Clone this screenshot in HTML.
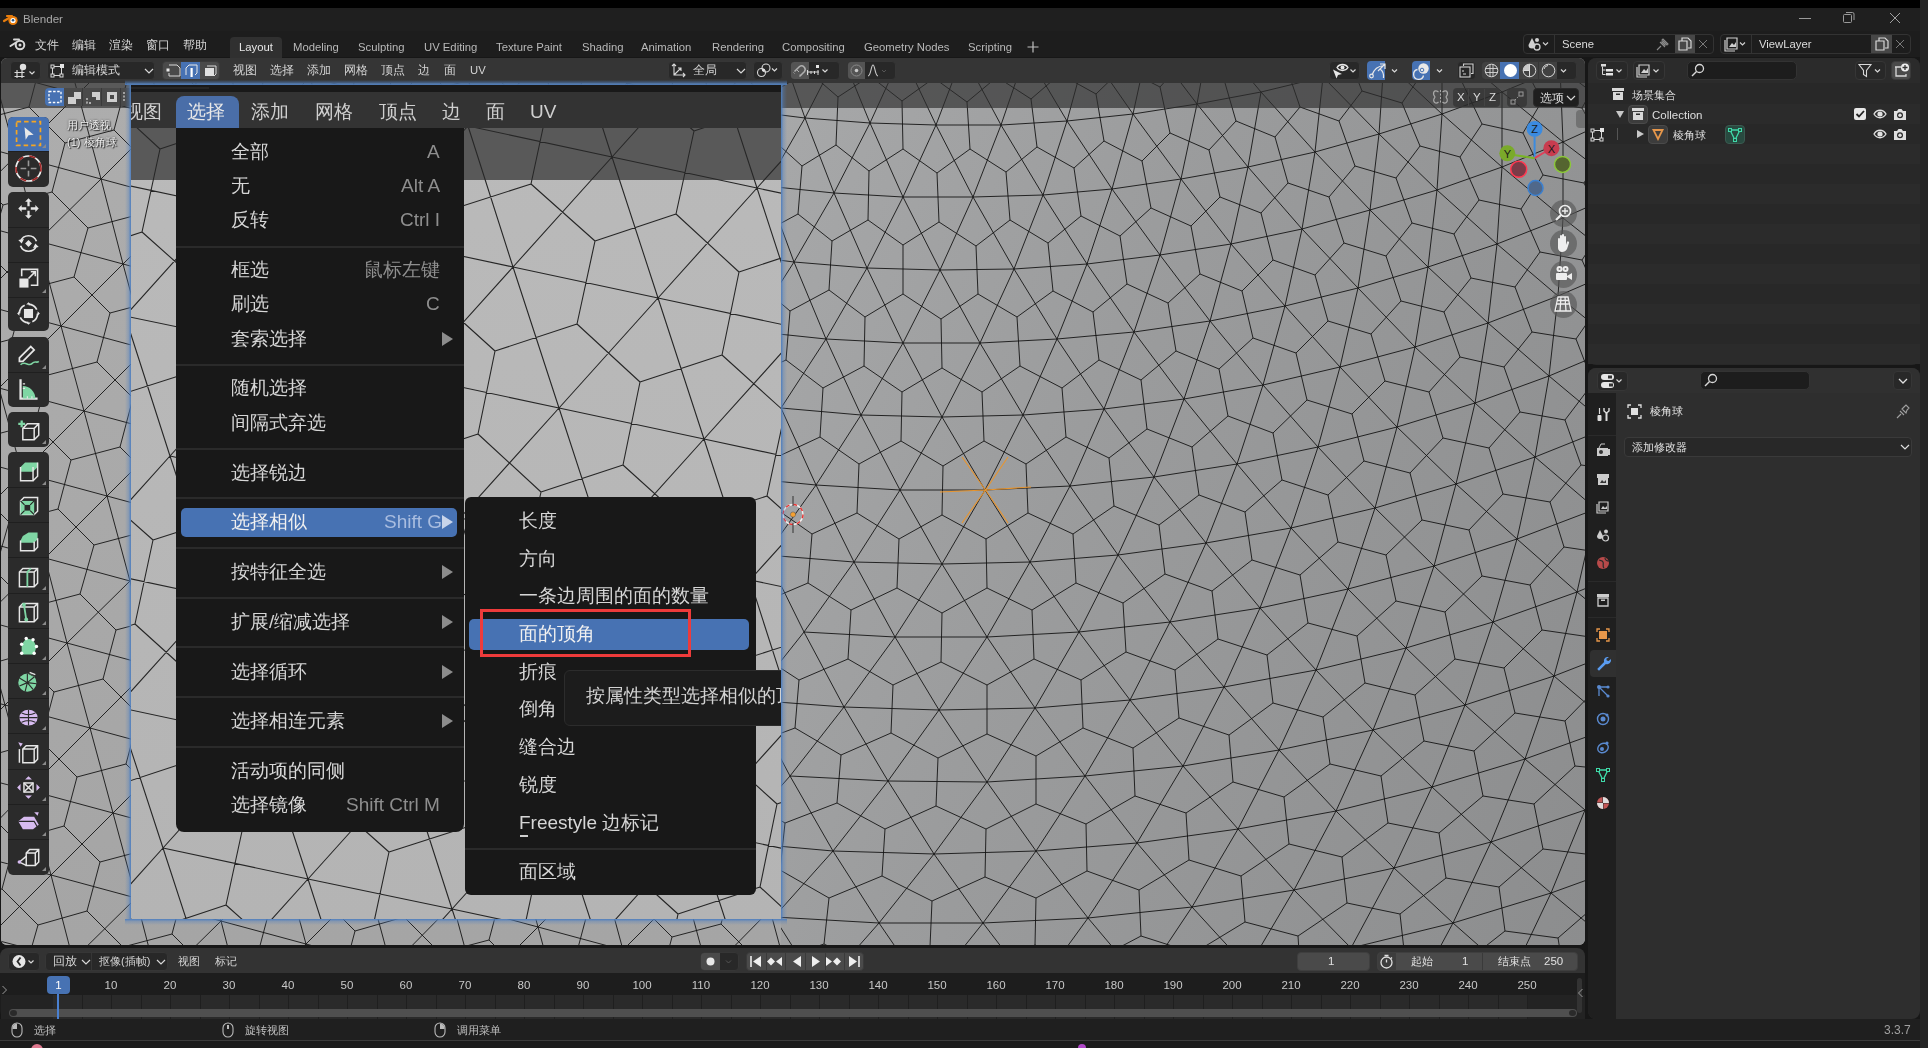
<!DOCTYPE html>
<html><head><meta charset="utf-8">
<style>
*{margin:0;padding:0;box-sizing:border-box}
html,body{width:1928px;height:1048px;overflow:hidden;background:#1d1d1d;font-family:"Liberation Sans",sans-serif;color:#d0d0d0}
.a{position:absolute}
.t{position:absolute;white-space:nowrap;font-size:12px;line-height:14px;color:#cccccc}
svg{position:absolute;left:0;top:0}
.c{position:absolute;white-space:nowrap;will-change:transform;font-size:11.5px;line-height:14px;color:#d4d4d4}
.bx{position:absolute;border-radius:4px;background:#282828;border:1px solid #3a3a3a}
.ic{position:absolute;overflow:visible}
.nb{left:1550px;width:27px;height:27px;border-radius:50%;background:rgba(85,85,85,0.62)}

.tbg{left:8px;width:41px;background:#2b2b2b;border-radius:5px}

.mi{position:absolute;will-change:transform;left:231px;white-space:nowrap;font-size:19px;line-height:22px;color:#d6d6d6}
.ms{position:absolute;will-change:transform;right:1488px;white-space:nowrap;font-size:19px;line-height:22px;color:#8e8e8e;text-align:right}
.si{position:absolute;will-change:transform;left:519px;white-space:nowrap;font-size:19px;line-height:22px;color:#d6d6d6}
.ma{position:absolute;left:442px;width:0;height:0;border-left:11px solid #8c8c8c;border-top:7px solid transparent;border-bottom:7px solid transparent}


</style></head><body>
<!-- top black strip -->
<div class="a" style="left:0;top:0;width:1920px;height:8px;background:#000"></div>
<div class="a" style="left:1920px;top:0;width:8px;height:1048px;background:#252525"></div>
<!-- title bar -->
<div class="a" style="left:0;top:8px;width:1920px;height:23px;background:#1f1f1f"></div>
<!-- top bar -->
<div class="a" style="left:0;top:31px;width:1920px;height:27px;background:#1d1d1d"></div>
<!-- gaps background -->
<div class="a" style="left:0;top:57px;width:1920px;height:984px;background:#171717"></div>

<!-- title contents -->
<svg class="ic" style="left:3px;top:12px" width="16" height="14" viewBox="0 0 16 14"><path d="M1 9 L6 6 M4 4 L9 4" stroke="#e87d0d" stroke-width="2.2" stroke-linecap="round"/><circle cx="10" cy="8.5" r="4.6" fill="#e87d0d"/><circle cx="10" cy="8.5" r="2.6" fill="#fff"/><circle cx="10" cy="8.3" r="1.3" fill="#265787"/></svg>
<div class="c" style="left:23px;top:12px;font-size:11.6px;color:#a8a8a8">Blender</div>
<svg class="ic" style="left:1799px;top:18px" width="12" height="2"><rect width="12" height="1" fill="#9a9a9a"/></svg>
<svg class="ic" style="left:1843px;top:12px" width="12" height="12" viewBox="0 0 12 12"><rect x="0.5" y="2.5" width="8" height="8" rx="1" fill="none" stroke="#9a9a9a"/><path d="M3 0.5h6.5a1.5 1.5 0 0 1 1.5 1.5V8" fill="none" stroke="#9a9a9a"/></svg>
<svg class="ic" style="left:1889px;top:12px" width="12" height="12" viewBox="0 0 12 12"><path d="M1 1L11 11M11 1L1 11" stroke="#a0a0a0" stroke-width="1"/></svg>
<!-- top bar contents -->
<svg class="ic" style="left:9px;top:36px" width="17" height="15" viewBox="0 0 17 15"><path d="M1.5 10 L7 6.5 M5 3.5 L10 3.5" stroke="#d8d8d8" stroke-width="2" stroke-linecap="round"/><circle cx="11" cy="9" r="4.3" fill="none" stroke="#d8d8d8" stroke-width="2"/><circle cx="11" cy="9" r="1.5" fill="#d8d8d8"/></svg>
<div class="c" style="left:35px;top:38px">文件</div>
<div class="c" style="left:72px;top:38px">编辑</div>
<div class="c" style="left:109px;top:38px">渲染</div>
<div class="c" style="left:146px;top:38px">窗口</div>
<div class="c" style="left:183px;top:38px">帮助</div>
<div class="a" style="left:230px;top:37px;width:52px;height:21px;background:#303030;border-radius:4px 4px 0 0"></div>
<div class="c" style="left:239px;top:40px;font-size:11.3px;color:#e6e6e6">Layout</div>
<div class="c" style="left:293px;top:40px;font-size:11.3px;color:#b8b8b8">Modeling</div>
<div class="c" style="left:358px;top:40px;font-size:11.3px;color:#b8b8b8">Sculpting</div>
<div class="c" style="left:424px;top:40px;font-size:11.3px;color:#b8b8b8">UV Editing</div>
<div class="c" style="left:496px;top:40px;font-size:11.3px;color:#b8b8b8">Texture Paint</div>
<div class="c" style="left:582px;top:40px;font-size:11.3px;color:#b8b8b8">Shading</div>
<div class="c" style="left:641px;top:40px;font-size:11.3px;color:#b8b8b8">Animation</div>
<div class="c" style="left:712px;top:40px;font-size:11.3px;color:#b8b8b8">Rendering</div>
<div class="c" style="left:782px;top:40px;font-size:11.3px;color:#b8b8b8">Compositing</div>
<div class="c" style="left:864px;top:40px;font-size:11.3px;color:#b8b8b8">Geometry Nodes</div>
<div class="c" style="left:968px;top:40px;font-size:11.3px;color:#b8b8b8">Scripting</div>
<svg class="ic" style="left:1027px;top:41px" width="12" height="12"><path d="M6 0.5V11.5M0.5 6H11.5" stroke="#c0c0c0" stroke-width="1.2"/></svg>
<!-- scene selector -->
<div class="bx" style="left:1523px;top:34px;width:191px;height:20px;background:#1d1d1d;border-color:#333"></div>
<div class="a" style="left:1554px;top:35px;width:1px;height:18px;background:#333"></div>
<div class="a" style="left:1675px;top:35px;width:20px;height:18px;background:#474747"></div>
<svg class="ic" style="left:1527px;top:36px" width="24" height="16" viewBox="0 0 24 16"><path d="M5 2 L1.5 9 a3.5 3.5 0 0 0 7 0Z" fill="#cfcfcf"/><circle cx="10" cy="4" r="2" fill="#cfcfcf"/><circle cx="10" cy="11" r="3" fill="none" stroke="#cfcfcf" stroke-width="1.3"/><path d="M16 6.5l2.5 2.5 2.5-2.5" fill="none" stroke="#cfcfcf" stroke-width="1.2"/></svg>
<div class="c" style="left:1562px;top:37px;font-size:11.3px;color:#dcdcdc">Scene</div>
<svg class="ic" style="left:1655px;top:36px" width="16" height="16" viewBox="0 0 16 16"><path d="M2 14 L6 10 M5 6 L10 11 M7 4 L12 9 L13 8 L8 3Z M6.5 5.5 L10.5 9.5" fill="none" stroke="#8a8a8a" stroke-width="1.1"/></svg>
<svg class="ic" style="left:1678px;top:37px" width="14" height="14" viewBox="0 0 14 14"><path d="M4 3.5V1h6l3 3v7H10 M1 4h8v9H1z" fill="none" stroke="#d8d8d8" stroke-width="1.2"/></svg>
<svg class="ic" style="left:1698px;top:39px" width="10" height="10"><path d="M1 1L9 9M9 1L1 9" stroke="#7a7a7a" stroke-width="1"/></svg>
<!-- view layer -->
<div class="bx" style="left:1720px;top:34px;width:191px;height:20px;background:#1d1d1d;border-color:#333"></div>
<div class="a" style="left:1751px;top:35px;width:1px;height:18px;background:#333"></div>
<div class="a" style="left:1871px;top:35px;width:21px;height:18px;background:#474747"></div>
<svg class="ic" style="left:1724px;top:36px" width="24" height="16" viewBox="0 0 24 16"><path d="M1 4v11h10 M3 2v11h10V2z" fill="none" stroke="#d0d0d0" stroke-width="1.2"/><path d="M5 11l3-4 2 2 2-3v5z" fill="#d0d0d0"/><path d="M16 6.5l2.5 2.5 2.5-2.5" fill="none" stroke="#cfcfcf" stroke-width="1.2"/></svg>
<div class="c" style="left:1759px;top:37px;font-size:11.3px;color:#dcdcdc">ViewLayer</div>
<svg class="ic" style="left:1875px;top:37px" width="14" height="14" viewBox="0 0 14 14"><path d="M4 3.5V1h6l3 3v7H10 M1 4h8v9H1z" fill="none" stroke="#d8d8d8" stroke-width="1.2"/></svg>
<svg class="ic" style="left:1895px;top:39px" width="10" height="10"><path d="M1 1L9 9M9 1L1 9" stroke="#7a7a7a" stroke-width="1"/></svg>

<!-- 3D viewport -->
<div class="a" id="vp" style="left:1px;top:58px;width:1584px;height:887px;border-radius:6px;overflow:hidden;background:#9a9a9a">
  <div class="a" style="left:0;top:0;width:1584px;height:25px;background:#353535"></div>
  <div class="a" style="left:780px;top:25px;width:804px;height:862px;background:linear-gradient(110deg,#a7a8a9 0%,#9b9c9d 38%,#8c8d8e 100%)"></div>
  <div class="a" style="left:0;top:25px;width:780px;height:862px;background:linear-gradient(180deg,#adadad 0%,#a5a5a5 100%)"></div>
</div>
<div class="a" style="left:781px;top:83px;width:804px;height:862px;overflow:hidden;border-radius:0 0 6px 0">
<svg width="804" height="862" viewBox="781 83 804 862"><path d="M732 842L833 851M824 944L769 963M774 917L879 923M774 917L820 990M795 728L744 747M750 700L844 707M750 700L790 776M837 803L785 823M785 823L738 795M790 776L888 781M790 776L833 851M790 776L732 842M882 876L829 898M829 898L780 870M780 870L785 823M833 851L934 854M833 851L879 923M833 851L774 917M875 969L824 944M824 944L829 898M879 923L983 923M879 923L927 993M879 923L820 990M733 477L816 485M808 583L761 603M766 555L854 562M766 555L804 632M848 659L799 680M799 680L756 652M804 632L895 637M804 632L844 707M804 632L750 700M891 733L841 755M841 755L795 728M795 728L799 680M844 707L939 710M844 707L888 781M844 707L790 776M936 806L885 829M885 829L837 803M837 803L841 755M888 781L987 782M888 781L934 854M888 781L833 851M985 877L932 901M932 901L882 876M882 876L885 829M934 854L1036 851M934 854L983 923M934 854L879 923M1035 945L982 970M930 947L932 901M983 923L1088 918M983 923L1035 991M983 923L927 993M723 253L794 262M786 360L745 379M750 331L826 339M750 331L781 408M820 437L777 457M781 408L861 415M781 408L816 485M781 408L733 477M857 513L812 534M812 534L772 506M816 485L900 490M816 485L854 562M816 485L766 555M897 588L851 610M851 610L808 583M808 583L812 534M854 562L942 564M854 562L895 637M854 562L804 632M941 662L893 685M893 685L848 659M848 659L851 610M895 637L987 637M895 637L939 710M895 637L844 707M987 734L938 758M938 758L891 733M891 733L893 685M939 710L1035 708M939 710L987 782M939 710L888 781M1036 804L986 829M986 829L936 806M936 806L938 758M987 782L1085 776M987 782L1036 851M987 782L934 854M1087 871L1036 898M1036 898L985 877M985 877L986 829M1036 851L1137 843M1036 851L1088 918M1036 851L983 923M1141 936L1088 964M1088 964L1035 945M1035 945L1036 898M1088 918L1192 907M1088 918L1142 982M1088 918L1035 991M741 110L805 118M798 214L761 234M766 186L834 193M766 186L794 262M829 290L790 311M790 311L756 282M794 262L867 268M794 262L826 339M794 262L750 331M864 366L823 388M823 388L786 360M786 360L790 311M826 339L903 343M826 339L861 415M826 339L781 408M901 441L859 464M859 464L820 437M820 437L823 388M861 415L942 417M861 415L900 490M861 415L816 485M942 515L899 539M899 539L857 513M857 513L859 464M900 490L985 490M900 490L942 564M900 490L854 562M987 588L942 613M942 613L897 588M897 588L899 539M942 564L1030 562M942 564L987 637M942 564L895 637M1034 659L987 685M987 685L941 662M941 662L942 613M987 637L1079 632M987 637L1035 708M987 637L939 710M1083 728L1036 756M1036 756L987 734M987 734L987 685M1035 708L1130 700M1035 708L1085 776M1035 708L987 782M1135 796L1086 824M1086 824L1036 804M1036 804L1036 756M1085 776L1183 766M1085 776L1137 843M1085 776L1036 851M1189 860L1139 890M1139 890L1087 871M1087 871L1086 824M1137 843L1238 829M1137 843L1192 907M1137 843L1088 918M1245 922L1194 953M1194 953L1141 936M1141 936L1139 890M1192 907L1294 890M1192 907L1248 968M1192 907L1142 982M808 71L775 91M779 44L805 118M836 145L802 166M802 166L771 138M805 118L870 123M805 118L834 193M805 118L766 186M868 220L832 241M832 241L798 214M798 214L802 166M834 193L903 197M834 193L867 268M834 193L794 262M903 294L865 317M865 317L829 290M829 290L832 241M867 268L940 270M867 268L903 343M867 268L826 339M942 368L902 392M902 392L864 366M864 366L865 317M903 343L980 343M903 343L942 417M903 343L861 415M984 441L943 466M943 466L901 441M901 441L902 392M942 417L1023 415M942 417L985 490M942 417L900 490M1028 513L986 539M986 539L942 515M942 515L943 466M985 490L1070 486M985 490L1030 562M985 490L942 564M1076 583L1032 610M1032 610L987 588M987 588L986 539M1030 562L1118 555M1030 562L1079 632M1030 562L987 637M1126 652L1081 680M1081 680L1034 659M1034 659L1032 610M1079 632L1170 622M1079 632L1130 700M1079 632L1035 708M1179 718L1133 748M1133 748L1083 728M1083 728L1081 680M1130 700L1224 687M1130 700L1183 766M1130 700L1085 776M1233 782L1186 813M1186 813L1135 796M1135 796L1133 748M1183 766L1279 750M1183 766L1238 829M1183 766L1137 843M1289 844L1241 876M1241 876L1189 860M1189 860L1186 813M1238 829L1336 811M1238 829L1294 890M1238 829L1192 907M1347 903L1298 936M1298 936L1245 922M1245 922L1241 876M1294 890L1394 868M1294 890L1351 948M1294 890L1248 968M1301 982L1298 936M1351 948L1453 923M870 76L838 97M838 97L808 71M840 50L870 123M840 50L805 118M903 149L869 171M869 171L836 145M836 145L838 97M870 123L936 125M870 123L903 197M870 123L834 193M939 222L903 245M903 245L868 220M868 220L869 171M903 197L973 197M903 197L940 270M903 197L867 268M978 294L941 319M941 319L903 294M903 294L903 245M940 270L1014 269M940 270L980 343M940 270L903 343M1020 366L982 392M982 392L942 368M942 368L941 319M980 343L1057 339M980 343L1023 415M980 343L942 417M1066 437L1026 464M1026 464L984 441M984 441L982 392M1023 415L1104 409M1023 415L1070 486M1023 415L985 490M1114 506L1073 534M1073 534L1028 513M1028 513L1026 464M1070 486L1154 477M1070 486L1118 555M1070 486L1030 562M1165 574L1123 603M1123 603L1076 583M1076 583L1073 534M1118 555L1206 543M1118 555L1170 622M1118 555L1079 632M1218 639L1175 670M1175 670L1126 652M1126 652L1123 603M1170 622L1260 608M1170 622L1224 687M1170 622L1130 700M1273 703L1229 735M1229 735L1179 718M1179 718L1175 670M1224 687L1316 670M1224 687L1279 750M1224 687L1183 766M1330 764L1284 797M1284 797L1233 782M1233 782L1229 735M1279 750L1373 730M1279 750L1336 811M1279 750L1238 829M1388 823L1342 857M1342 857L1289 844M1289 844L1284 797M1336 811L1432 787M1336 811L1394 868M1336 811L1294 890M1446 878L1400 914M1400 914L1347 903M1347 903L1342 857M1394 868L1491 842M1394 868L1453 923M1394 868L1351 948M1505 931L1458 968M1405 959L1400 914M1453 923L1551 893M1453 923L1512 975M1453 923L1410 1003M1512 975L1610 942M934 78L902 101M902 101L870 76M902 53L936 125M902 53L870 123M970 149L937 173M937 173L903 149M903 149L902 101M936 125L1001 125M936 125L973 197M936 125L903 197M1010 220L976 246M976 246L939 222M939 222L937 173M973 197L1043 195M973 197L1014 269M973 197L940 270M1053 291L1017 317M1017 317L978 294M978 294L976 246M1014 269L1087 264M1014 269L1057 339M1014 269L980 343M1099 360L1062 388M1062 388L1020 366M1020 366L1017 317M1057 339L1134 332M1057 339L1104 409M1057 339L1023 415M1147 429L1109 458M1109 458L1066 437M1066 437L1062 388M1104 409L1184 399M1104 409L1154 477M1104 409L1070 486M1199 495L1159 525M1159 525L1114 506M1114 506L1109 458M1154 477L1237 464M1154 477L1206 543M1154 477L1118 555M1252 560L1212 591M1212 591L1165 574M1165 574L1159 525M1206 543L1291 528M1206 543L1260 608M1206 543L1170 622M1308 623L1267 655M1267 655L1218 639M1218 639L1212 591M1260 608L1348 589M1260 608L1316 670M1260 608L1224 687M1365 683L1323 717M1323 717L1273 703M1273 703L1267 655M1316 670L1406 648M1316 670L1373 730M1316 670L1279 750M1424 741L1381 776M1381 776L1330 764M1330 764L1323 717M1373 730L1465 705M1373 730L1432 787M1373 730L1336 811M1483 796L1439 833M1439 833L1388 823M1388 823L1381 776M1432 787L1525 759M1432 787L1491 842M1432 787L1394 868M1543 849L1499 887M1499 887L1446 878M1446 878L1439 833M1491 842L1585 810M1491 842L1551 893M1491 842L1453 923M1603 899L1558 938M1558 938L1505 931M1505 931L1499 887M1551 893L1645 859M1551 893L1610 942M1551 893L1512 975M1565 981L1558 938M1610 942L1570 1024M997 77L967 102M967 102L934 78M963 54L1001 125M963 54L936 125M1037 147L1006 172M1006 172L970 149M970 149L967 102M1001 125L1067 121M1001 125L1043 195M1001 125L973 197M1081 216L1048 243M1048 243L1010 220M1010 220L1006 172M1043 195L1112 189M1043 195L1087 264M1043 195L1014 269M1127 284L1093 312M1093 312L1053 291M1053 291L1048 243M1087 264L1160 255M1087 264L1134 332M1087 264L1057 339M1176 351L1141 380M1141 380L1099 360M1099 360L1093 312M1134 332L1210 321M1134 332L1184 399M1134 332L1104 409M1228 416L1192 447M1192 447L1147 429M1147 429L1141 380M1184 399L1263 385M1184 399L1237 464M1184 399L1154 477M1282 480L1245 512M1245 512L1199 495M1199 495L1192 447M1237 464L1318 447M1237 464L1291 528M1237 464L1206 543M1338 542L1300 575M1300 575L1252 560M1252 560L1245 512M1291 528L1375 508M1291 528L1348 589M1291 528L1260 608M1396 601L1357 636M1357 636L1308 623M1308 623L1300 575M1348 589L1434 566M1348 589L1406 648M1348 589L1316 670M1455 659L1415 695M1415 695L1365 683M1365 683L1357 636M1406 648L1493 622M1406 648L1465 705M1406 648L1373 730M1515 713L1474 751M1474 751L1424 741M1424 741L1415 695M1465 705L1554 676M1465 705L1525 759M1465 705L1432 787M1575 766L1534 804M1534 804L1483 796M1483 796L1474 751M1525 759L1614 727M1525 759L1585 810M1525 759L1491 842M1594 855L1543 849M1543 849L1534 804M1585 810L1551 893M1060 74L1031 99M1031 99L997 77M1026 52L1067 121M1026 52L1001 125M1104 141L1074 168M1074 168L1037 147M1037 147L1031 99M1067 121L1133 114M1067 121L1112 189M1067 121L1043 195M1151 208L1120 236M1120 236L1081 216M1081 216L1074 168M1112 189L1181 179M1112 189L1160 255M1112 189L1087 264M1200 274L1168 303M1168 303L1127 284M1127 284L1120 236M1160 255L1231 244M1160 255L1210 321M1160 255L1134 332M1253 338L1219 369M1219 369L1176 351M1176 351L1168 303M1210 321L1285 306M1210 321L1263 385M1210 321L1184 399M1307 400L1273 433M1273 433L1228 416M1228 416L1219 369M1263 385L1340 367M1263 385L1318 447M1263 385L1237 464M1364 461L1328 495M1328 495L1282 480M1282 480L1273 433M1318 447L1397 427M1318 447L1375 508M1318 447L1291 528M1422 520L1386 555M1386 555L1338 542M1338 542L1328 495M1375 508L1456 484M1375 508L1434 566M1375 508L1348 589M1482 576L1445 612M1445 612L1396 601M1396 601L1386 555M1434 566L1517 539M1434 566L1493 622M1434 566L1406 648M1542 630L1504 668M1504 668L1455 659M1455 659L1445 612M1493 622L1577 592M1493 622L1554 676M1493 622L1465 705M1603 682L1565 721M1565 721L1515 713M1515 713L1504 668M1554 676L1639 643M1554 676L1614 727M1554 676L1525 759M1625 771L1575 766M1575 766L1565 721M1123 68L1096 94M1096 94L1060 74M1087 48L1133 114M1087 48L1067 121M1170 133L1142 161M1142 161L1104 141M1104 141L1096 94M1133 114L1197 104M1133 114L1181 179M1133 114L1112 189M1220 197L1191 226M1191 226L1151 208M1151 208L1142 161M1181 179L1248 167M1181 179L1231 244M1181 179L1160 255M1273 260L1242 291M1242 291L1200 274M1200 274L1191 226M1231 244L1302 229M1231 244L1285 306M1231 244L1210 321M1328 321L1296 353M1296 353L1253 338M1253 338L1242 291M1285 306L1358 288M1285 306L1340 367M1285 306L1263 385M1385 381L1352 414M1352 414L1307 400M1307 400L1296 353M1340 367L1415 347M1340 367L1397 427M1340 367L1318 447M1443 438L1410 473M1410 473L1364 461M1364 461L1352 414M1397 427L1475 403M1397 427L1456 484M1397 427L1375 508M1503 494L1469 530M1469 530L1422 520M1422 520L1410 473M1456 484L1535 457M1456 484L1517 539M1456 484L1434 566M1564 547L1530 585M1530 585L1482 576M1482 576L1469 530M1517 539L1596 509M1517 539L1577 592M1517 539L1493 622M1590 637L1542 630M1542 630L1530 585M1577 592L1658 559M1577 592L1639 643M1577 592L1554 676M1185 59L1160 87M1160 87L1123 68M1149 41L1197 104M1149 41L1133 114M1236 121L1209 150M1209 150L1170 133M1170 133L1160 87M1197 104L1261 92M1197 104L1248 167M1197 104L1181 179M1288 183L1261 213M1261 213L1220 197M1220 197L1209 150M1248 167L1315 152M1248 167L1302 229M1248 167L1231 244M1344 243L1315 275M1315 275L1273 260M1273 260L1261 213M1302 229L1370 210M1302 229L1358 288M1302 229L1285 306M1401 301L1371 334M1371 334L1328 321M1328 321L1315 275M1358 288L1428 267M1358 288L1415 347M1358 288L1340 367M1460 357L1429 392M1429 392L1385 381M1385 381L1371 334M1415 347L1488 323M1415 347L1475 403M1415 347L1397 427M1520 412L1489 448M1489 448L1443 438M1443 438L1429 392M1475 403L1549 376M1475 403L1535 457M1475 403L1456 484M1581 465L1550 502M1550 502L1503 494M1503 494L1489 448M1535 457L1610 427M1535 457L1596 509M1535 457L1517 539M1611 554L1564 547M1564 547L1550 502M1596 509L1577 592M1210 31L1261 92M1210 31L1197 104M1300 107L1275 137M1275 137L1236 121M1236 121L1223 76M1261 92L1323 77M1261 92L1315 152M1261 92L1248 167M1355 166L1329 197M1329 197L1288 183M1288 183L1275 137M1315 152L1379 134M1315 152L1370 210M1315 152L1302 229M1412 223L1386 256M1386 256L1344 243M1344 243L1329 197M1370 210L1437 190M1370 210L1428 267M1370 210L1358 288M1471 278L1444 312M1444 312L1401 301M1401 301L1386 256M1428 267L1497 244M1428 267L1488 323M1428 267L1415 347M1532 332L1504 367M1504 367L1460 357M1460 357L1444 312M1488 323L1558 296M1488 323L1549 376M1488 323L1475 403M1593 383L1565 420M1565 420L1520 412M1520 412L1504 367M1549 376L1620 346M1549 376L1610 427M1549 376L1535 457M1627 471L1581 465M1581 465L1565 420M1362 91L1339 121M1339 121L1300 107M1300 107L1285 63M1323 77L1379 134M1323 77L1315 152M1420 146L1396 178M1396 178L1355 166M1355 166L1339 121M1379 134L1442 114M1379 134L1437 190M1379 134L1370 210M1479 200L1454 234M1454 234L1412 223M1412 223L1396 178M1437 190L1502 167M1437 190L1497 244M1437 190L1428 267M1540 252L1515 287M1515 287L1471 278M1471 278L1454 234M1497 244L1563 218M1497 244L1558 296M1497 244L1488 323M1601 303L1576 339M1576 339L1532 332M1532 332L1515 287M1558 296L1625 267M1558 296L1620 346M1558 296L1549 376M1593 383L1576 339M1423 72L1402 103M1402 103L1362 91M1362 91L1345 47M1384 60L1442 114M1384 60L1379 134M1482 124L1460 157M1460 157L1420 146M1420 146L1402 103M1442 114L1502 92M1442 114L1502 167M1442 114L1437 190M1543 175L1521 209M1521 209L1479 200M1479 200L1460 157M1502 167L1563 142M1502 167L1563 218M1502 167L1497 244M1605 225L1582 260M1582 260L1540 252M1540 252L1521 209M1563 218L1626 190M1563 218L1625 267M1563 218L1558 296M1601 303L1582 260M1442 41L1502 92M1442 41L1442 114M1542 101L1523 133M1523 133L1482 124M1482 124L1462 82M1502 92L1560 68M1502 92L1563 142M1502 92L1502 167M1604 149L1584 183M1584 183L1543 175M1543 175L1523 133M1563 142L1622 115M1563 142L1626 190M1563 142L1563 218M1605 225L1584 183M1600 75L1582 108M1582 108L1542 101M1542 101L1521 60M1560 68L1622 115M1560 68L1563 142M1604 149L1582 108" stroke="#151515" stroke-width="1" fill="none" stroke-opacity="0.9"/></svg>
</div>
<div class="a" style="left:1px;top:83px;width:780px;height:862px;overflow:hidden;border-radius:0 0 0 6px">
<svg width="780" height="862" viewBox="1 83 780 862"><path d="M-80 683L5 705M-57 768L28 790M2 889L-47 902M-34 853L51 875M-12 938L73 960M-12 938L11 1023M-63 450L22 473M-40 535L45 558M18 656L-31 670M-18 620L67 643M-18 620L5 705M41 741L-8 755M5 705L90 728M5 705L28 790M5 705L-57 768M64 826L15 840M15 840L-21 804M28 790L113 813M28 790L51 875M28 790L-34 853M87 911L38 925M38 925L2 889M2 889L15 840M51 875L136 898M51 875L73 960M51 875L-12 938M24 974L38 925M-69 133L16 156M-47 218L38 241M12 339L-37 352M-24 303L61 326M35 424L-14 437M-1 388L84 411M-1 388L22 473M58 509L9 522M9 522L-27 486M22 473L107 496M22 473L45 558M22 473L-40 535M80 594L31 607M31 607L-5 571M-5 571L9 522M45 558L130 581M45 558L67 643M45 558L-18 620M103 679L54 692M54 692L18 656M18 656L31 607M67 643L152 666M67 643L90 728M67 643L5 705M126 764L77 777M77 777L41 741M41 741L54 692M90 728L175 751M90 728L113 813M90 728L28 790M149 849L100 862M100 862L64 826M64 826L77 777M113 813L198 836M113 813L136 898M113 813L51 875M172 934L123 947M123 947L87 911M87 911L100 862M136 898L221 921M136 898L158 983M136 898L73 960M29 107L-20 120M-7 71L78 94M-7 71L16 156M52 192L3 205M3 205L-33 169M16 156L101 179M16 156L38 241M16 156L-47 218M74 277L25 290M25 290L-11 254M-11 254L3 205M38 241L123 264M38 241L61 326M38 241L-24 303M97 362L48 375M48 375L12 339M12 339L25 290M61 326L146 349M61 326L84 411M61 326L-1 388M120 447L71 460M71 460L35 424M35 424L48 375M84 411L169 434M84 411L107 496M84 411L22 473M143 532L94 545M94 545L58 509M58 509L71 460M107 496L192 519M107 496L130 581M107 496L45 558M165 617L116 630M116 630L80 594M80 594L94 545M130 581L215 604M130 581L152 666M130 581L67 643M188 702L139 715M139 715L103 679M103 679L116 630M152 666L237 689M152 666L175 751M152 666L90 728M211 787L162 800M162 800L126 764M126 764L139 715M175 751L260 774M175 751L198 836M175 751L113 813M234 872L185 885M185 885L149 849M149 849L162 800M198 836L283 859M198 836L221 921M198 836L136 898M208 970L172 934M172 934L185 885M221 921L306 944M221 921L243 1006M221 921L158 983M55 9L78 94M114 130L65 143M65 143L29 107M29 107L42 58M78 94L163 117M78 94L101 179M78 94L16 156M137 215L88 228M88 228L52 192M52 192L65 143M101 179L186 202M101 179L123 264M101 179L38 241M159 300L110 313M110 313L74 277M74 277L88 228M123 264L208 287M123 264L146 349M123 264L61 326M182 385L133 398M133 398L97 362M97 362L110 313M146 349L231 372M146 349L169 434M146 349L84 411M205 470L156 483M156 483L120 447M120 447L133 398M169 434L254 457M169 434L192 519M169 434L107 496M228 555L179 568M179 568L143 532M143 532L156 483M192 519L277 542M192 519L215 604M192 519L130 581M250 640L201 653M201 653L165 617M165 617L179 568M215 604L300 627M215 604L237 689M215 604L152 666M273 725L224 738M224 738L188 702M188 702L201 653M237 689L322 712M237 689L260 774M237 689L175 751M296 810L247 823M247 823L211 787M211 787L224 738M260 774L345 797M260 774L283 859M260 774L198 836M319 895L270 908M270 908L234 872M234 872L247 823M283 859L368 882M283 859L306 944M283 859L221 921M257 957L270 908M306 944L391 967M306 944L328 1029M306 944L243 1006M140 32L163 117M140 32L78 94M199 152L150 166M150 166L114 130M114 130L127 81M163 117L248 139M163 117L186 202M163 117L101 179M222 237L173 251M173 251L137 215M137 215L150 166M186 202L271 224M186 202L208 287M186 202L123 264M244 322L195 336M195 336L159 300M159 300L173 251M208 287L293 309M208 287L231 372M208 287L146 349M267 407L218 421M218 421L182 385M182 385L195 336M231 372L316 394M231 372L254 457M231 372L169 434M290 492L241 506M241 506L205 470M205 470L218 421M254 457L339 479M254 457L277 542M254 457L192 519M313 577L264 591M264 591L228 555M228 555L241 506M277 542L362 564M277 542L300 627M277 542L215 604M335 662L286 676M286 676L250 640M250 640L264 591M300 627L385 649M300 627L322 712M300 627L237 689M358 747L309 761M309 761L273 725M273 725L286 676M322 712L407 734M322 712L345 797M322 712L260 774M381 832L332 846M332 846L296 810M296 810L309 761M345 797L430 819M345 797L368 882M345 797L283 859M404 917L355 931M355 931L319 895M319 895L332 846M368 882L453 904M368 882L391 967M368 882L306 944M342 980L355 931M261 90L212 103M212 103L176 67M225 54L248 139M225 54L163 117M284 175L235 188M235 188L199 152M199 152L212 103M248 139L333 162M248 139L271 224M248 139L186 202M307 260L258 273M258 273L222 237M222 237L235 188M271 224L356 247M271 224L293 309M271 224L208 287M329 345L280 358M280 358L244 322M244 322L258 273M293 309L378 332M293 309L316 394M293 309L231 372M352 430L303 443M303 443L267 407M267 407L280 358M316 394L401 417M316 394L339 479M316 394L254 457M375 515L326 528M326 528L290 492M290 492L303 443M339 479L424 502M339 479L362 564M339 479L277 542M398 600L349 613M349 613L313 577M313 577L326 528M362 564L447 587M362 564L385 649M362 564L300 627M420 685L371 698M371 698L335 662M335 662L349 613M385 649L470 672M385 649L407 734M385 649L322 712M443 770L394 783M394 783L358 747M358 747L371 698M407 734L492 757M407 734L430 819M407 734L345 797M466 855L417 868M417 868L381 832M381 832L394 783M430 819L515 842M430 819L453 904M430 819L368 882M489 940L440 953M440 953L404 917M404 917L417 868M453 904L538 927M453 904L476 989M453 904L391 967M346 113L297 126M297 126L261 90M261 90L274 41M310 77L395 100M310 77L333 162M310 77L248 139M369 198L320 211M320 211L284 175M284 175L297 126M333 162L418 185M333 162L356 247M333 162L271 224M392 283L343 296M343 296L307 260M307 260L320 211M356 247L441 270M356 247L378 332M356 247L293 309M414 368L365 381M365 381L329 345M329 345L343 296M378 332L463 355M378 332L401 417M378 332L316 394M437 453L388 466M388 466L352 430M352 430L365 381M401 417L486 440M401 417L424 502M401 417L339 479M460 538L411 551M411 551L375 515M375 515L388 466M424 502L509 525M424 502L447 587M424 502L362 564M483 623L434 636M434 636L398 600M398 600L411 551M447 587L532 610M447 587L470 672M447 587L385 649M505 708L456 721M456 721L420 685M420 685L434 636M470 672L555 695M470 672L492 757M470 672L407 734M528 793L479 806M479 806L443 770M443 770L456 721M492 757L577 780M492 757L515 842M492 757L430 819M551 878L502 891M502 891L466 855M466 855L479 806M515 842L600 865M515 842L538 927M515 842L453 904M525 976L489 940M489 940L502 891M538 927L623 950M538 927L561 1012M538 927L476 989M372 15L395 100M431 136L382 149M382 149L346 113M346 113L359 64M395 100L480 123M395 100L418 185M395 100L333 162M454 221L405 234M405 234L369 198M369 198L382 149M418 185L503 208M418 185L441 270M418 185L356 247M477 306L428 319M428 319L392 283M392 283L405 234M441 270L526 293M441 270L463 355M441 270L378 332M499 391L450 404M450 404L414 368M414 368L428 319M463 355L548 378M463 355L486 440M463 355L401 417M522 476L473 489M473 489L437 453M437 453L450 404M486 440L571 463M486 440L509 525M486 440L424 502M545 561L496 574M496 574L460 538M460 538L473 489M509 525L594 548M509 525L532 610M509 525L447 587M568 646L519 659M519 659L483 623M483 623L496 574M532 610L617 633M532 610L555 695M532 610L470 672M590 731L541 744M541 744L505 708M505 708L519 659M555 695L640 718M555 695L577 780M555 695L492 757M613 816L564 829M564 829L528 793M528 793L541 744M577 780L662 803M577 780L600 865M577 780L515 842M636 901L587 914M587 914L551 878M551 878L564 829M600 865L685 888M600 865L623 950M600 865L538 927M574 963L587 914M493 74L444 87M444 87L408 51M457 38L480 123M457 38L395 100M516 159L467 172M467 172L431 136M431 136L444 87M480 123L565 145M480 123L503 208M480 123L418 185M539 244L490 257M490 257L454 221M454 221L467 172M503 208L588 230M503 208L526 293M503 208L441 270M562 329L513 342M513 342L477 306M477 306L490 257M526 293L611 315M526 293L548 378M526 293L463 355M584 414L535 427M535 427L499 391M499 391L513 342M548 378L633 400M548 378L571 463M548 378L486 440M607 499L558 512M558 512L522 476M522 476L535 427M571 463L656 485M571 463L594 548M571 463L509 525M630 584L581 597M581 597L545 561M545 561L558 512M594 548L679 570M594 548L617 633M594 548L532 610M653 669L604 682M604 682L568 646M568 646L581 597M617 633L702 655M617 633L640 718M617 633L555 695M675 754L626 767M626 767L590 731M590 731L604 682M640 718L725 740M640 718L662 803M640 718L577 780M698 839L649 852M649 852L613 816M613 816L626 767M662 803L747 825M662 803L685 888M662 803L600 865M721 924L672 937M672 937L636 901M636 901L649 852M685 888L770 910M685 888L708 973M685 888L623 950M659 986L672 937M578 96L529 109M529 109L493 74M542 60L627 83M542 60L565 145M542 60L480 123M601 181L552 195M552 195L516 159M516 159L529 109M565 145L650 168M565 145L588 230M565 145L503 208M624 266L575 280M575 280L539 244M539 244L552 195M588 230L673 253M588 230L611 315M588 230L526 293M647 351L598 365M598 365L562 329M562 329L575 280M611 315L696 338M611 315L633 400M611 315L548 378M669 436L620 450M620 450L584 414M584 414L598 365M633 400L718 423M633 400L656 485M633 400L571 463M692 521L643 535M643 535L607 499M607 499L620 450M656 485L741 508M656 485L679 570M656 485L594 548M715 606L666 620M666 620L630 584M630 584L643 535M679 570L764 593M679 570L702 655M679 570L617 633M738 691L689 705M689 705L653 669M653 669L666 620M702 655L787 678M702 655L725 740M702 655L640 718M760 776L711 790M711 790L675 754M675 754L689 705M725 740L810 763M725 740L747 825M725 740L662 803M783 861L734 875M734 875L698 839M698 839L711 790M747 825L832 848M747 825L770 910M747 825L685 888M757 960L721 924M721 924L734 875M770 910L855 933M770 910L793 995M770 910L708 973M663 119L614 132M614 132L578 96M578 96L591 47M627 83L712 106M627 83L650 168M627 83L565 145M686 204L637 217M637 217L601 181M601 181L614 132M650 168L735 191M650 168L673 253M650 168L588 230M709 289L660 302M660 302L624 266M624 266L637 217M673 253L758 276M673 253L696 338M673 253L611 315M732 374L683 387M683 387L647 351M647 351L660 302M696 338L781 361M696 338L718 423M696 338L633 400M754 459L705 472M705 472L669 436M669 436L683 387M718 423L803 446M718 423L741 508M718 423L656 485M777 544L728 557M728 557L692 521M692 521L705 472M741 508L826 531M741 508L764 593M741 508L679 570M800 629L751 642M751 642L715 606M715 606L728 557M764 593L849 616M764 593L787 678M764 593L702 655M823 714L774 727M774 727L738 691M738 691L751 642M787 678L725 740M796 812L760 776M760 776L774 727M810 763L747 825M832 848L770 910M690 21L712 106M690 21L627 83M748 142L699 155M699 155L663 119M663 119L676 70M712 106L797 129M712 106L735 191M712 106L650 168M771 227L722 240M722 240L686 204M686 204L699 155M735 191L820 214M735 191L758 276M735 191L673 253M794 312L745 325M745 325L709 289M709 289L722 240M758 276L843 299M758 276L781 361M758 276L696 338M817 397L768 410M768 410L732 374M732 374L745 325M781 361L866 384M781 361L803 446M781 361L718 423M790 495L754 459M754 459L768 410M803 446L741 508M813 580L777 544M777 544L790 495M826 531L764 593M811 80L761 93M761 93L726 57M775 44L797 129M775 44L712 106M784 178L748 142M748 142L761 93M797 129L735 191M807 263L771 227M771 227L784 178M820 214L758 276M843 299L781 361" stroke="#151515" stroke-width="1" fill="none" stroke-opacity="0.9"/></svg>
</div>
<!-- tool header band -->
<div class="a" style="left:1px;top:83px;width:1584px;height:25px;background:rgba(45,45,45,0.66)"></div>
<div class="a" style="left:45px;top:88px;width:86px;height:18px;background:#4a4a4a;border-radius:4px 0 0 4px"></div>
<div class="a" style="left:45px;top:88px;width:19px;height:18px;background:#4772b3;border-radius:4px 0 0 4px"></div>
<div class="a" style="left:82px;top:88px;width:1px;height:18px;background:#3a3a3a"></div>
<div class="a" style="left:101px;top:88px;width:1px;height:18px;background:#3a3a3a"></div>
<div class="a" style="left:120px;top:88px;width:1px;height:18px;background:#3a3a3a"></div>
<svg class="ic" style="left:46px;top:89px" width="86" height="16" viewBox="0 0 86 16"><rect x="3" y="2.5" width="12" height="11" fill="none" stroke="#fff" stroke-width="1.3" stroke-dasharray="2.5 1.6"/><path d="M22 8h6V3h7v7h-5v5h-8z" fill="#d0d0d0"/><path d="M41 9v5h5" fill="none" stroke="#d0d0d0" stroke-width="1.3" stroke-dasharray="2 1.5"/><path d="M46 3h8v8h-4V8h-4z" fill="#d0d0d0"/><path d="M61 3h10v10H61z M64 6v4h4V6z" fill="#d0d0d0" fill-rule="evenodd"/><path d="M78 3v10" stroke="#d0d0d0" stroke-width="1.3" stroke-dasharray="2 1.5"/></svg>
<div class="c" style="left:67px;top:118px;font-size:11px;color:#f0f0f0;text-shadow:1px 1px 1px #222,0 0 2px #333">用户透视</div>
<div class="c" style="left:67px;top:135px;font-size:11px;color:#f0f0f0;text-shadow:1px 1px 1px #222,0 0 2px #333">(1) 棱角球</div>
<svg class="ic" style="left:1432px;top:89px" width="17" height="16" viewBox="0 0 17 16"><path d="M8.5 1v14" stroke="#aaa" stroke-dasharray="2 1.5"/><path d="M6.5 3C2 0 0 4 3 8c-3 4 0 8 3.5 5M10.5 3C15 0 17 4 14 8c3 4 0 8-3.5 5" fill="none" stroke="#aaa" stroke-width="1.2"/></svg>
<div class="a" style="left:1453px;top:88px;width:47px;height:19px;background:rgba(40,40,40,0.55);border:1px solid rgba(60,60,60,0.7);border-radius:4px"></div>
<div class="a" style="left:1468px;top:89px;width:1px;height:17px;background:#444"></div>
<div class="a" style="left:1484px;top:89px;width:1px;height:17px;background:#444"></div>
<div class="c" style="left:1457px;top:90px;font-size:11.5px;color:#dcdcdc">X</div>
<div class="c" style="left:1473px;top:90px;font-size:11.5px;color:#dcdcdc">Y</div>
<div class="c" style="left:1489px;top:90px;font-size:11.5px;color:#dcdcdc">Z</div>
<div class="a" style="left:1507px;top:88px;width:20px;height:19px;background:rgba(40,40,40,0.55);border:1px solid rgba(60,60,60,0.7);border-radius:4px"></div>
<svg class="ic" style="left:1510px;top:91px" width="14" height="14" viewBox="0 0 14 14"><rect x="9" y="1" width="4" height="4" fill="none" stroke="#999" stroke-width="1"/><rect x="1" y="9" width="4" height="4" fill="none" stroke="#999" stroke-width="1"/><path d="M5 9l4-4" stroke="#999" stroke-dasharray="1.5 1.5"/></svg>
<div class="a" style="left:1533px;top:88px;width:46px;height:19px;background:#1f1f1f;border:1px solid #2a2a2a;border-radius:4px"></div>
<div class="c" style="left:1540px;top:91px;font-size:11.5px;color:#dcdcdc">选项</div>
<svg class="ic" style="left:1566px;top:95px" width="10" height="6"><path d="M1 1l4 4 4-4" fill="none" stroke="#d8d8d8" stroke-width="1.2"/></svg>
<div class="a" style="left:1576px;top:110px;width:9px;height:18px;background:rgba(80,80,80,0.5);border-radius:4px 0 0 4px"></div>
<!-- orange star -->
<svg class="ic" style="left:930px;top:450px" width="110" height="80" viewBox="930 450 110 80"><path d="M985.5 490L962 457M985.5 490L1008 457M985.5 490L940 492M985.5 490L1031 487M985.5 490L962 523M985.5 490L1008 523" stroke="#e8952e" stroke-width="1.1"/></svg>
<!-- 3d cursor -->
<svg class="ic" style="left:778px;top:499px" width="30" height="30" viewBox="0 0 30 30"><circle cx="15" cy="15.5" r="10" fill="none" stroke="#f2f2f2" stroke-width="1.4"/><circle cx="15" cy="15.5" r="10" fill="none" stroke="#e83030" stroke-width="1.4" stroke-dasharray="3.9 3.95"/><path d="M15 -3v10M15 24v10" stroke="#333" stroke-width="1"/><circle cx="15" cy="15.5" r="2.6" fill="#f5a030" stroke="#555" stroke-width="0.5"/></svg>
<!-- navigation gizmo -->
<svg class="ic" style="left:1490px;top:115px" width="90" height="90" viewBox="1490 115 90 90">
<path d="M1534.6 158.2L1534.6 137" stroke="#3b8be0" stroke-width="2"/><path d="M1534.6 158.2L1545 152" stroke="#e0405a" stroke-width="2"/><path d="M1534.6 158.2L1514 155" stroke="#7ab528" stroke-width="2"/>
<circle cx="1535.5" cy="188" r="7.5" fill="#50688a" stroke="#3b80d0" stroke-width="1.5"/>
<circle cx="1518.7" cy="169.3" r="8" fill="#7a3b48" stroke="#ff3850" stroke-width="1.5"/>
<circle cx="1562.5" cy="164.4" r="8" fill="#556530" stroke="#8cc83a" stroke-width="1.5"/>
<circle cx="1551.4" cy="148.2" r="8" fill="#c83c50"/><text x="1551.4" y="152.5" font-size="11" text-anchor="middle" fill="#1a1a1a" font-family="Liberation Sans">X</text>
<circle cx="1507.3" cy="153.3" r="8" fill="#7aaa2a"/><text x="1507.3" y="157.5" font-size="11" text-anchor="middle" fill="#1a1a1a" font-family="Liberation Sans">Y</text>
<circle cx="1534.6" cy="128.9" r="8" fill="#3b8be0"/><text x="1534.6" y="133" font-size="11" text-anchor="middle" fill="#1a1a1a" font-family="Liberation Sans">Z</text>
</svg>
<!-- nav buttons -->
<div class="a nb" style="top:200px"></div><div class="a nb" style="top:230px"></div><div class="a nb" style="top:261px"></div><div class="a nb" style="top:291px"></div>
<svg class="ic" style="left:1553px;top:203px" width="20" height="20" viewBox="0 0 20 20"><circle cx="12" cy="8" r="5.5" fill="none" stroke="#eee" stroke-width="1.6"/><path d="M8 12l-5 5" stroke="#eee" stroke-width="2.2"/><path d="M12 5v6M9 8h6" stroke="#eee" stroke-width="1.3"/></svg>
<svg class="ic" style="left:1553px;top:233px" width="20" height="20" viewBox="0 0 20 20"><path d="M5 11V6a1 1 0 0 1 2 0v4V3a1 1 0 0 1 2 0v7V2a1 1 0 0 1 2 0v8V4a1 1 0 0 1 2 0v8l1-3a1 1 0 0 1 2 1l-2 6c-1 2-3 3-5 3H9c-2 0-4-2-4-4z" fill="#eee"/></svg>
<svg class="ic" style="left:1553px;top:264px" width="20" height="20" viewBox="0 0 20 20"><circle cx="6.5" cy="5" r="3" fill="#eee"/><circle cx="12.5" cy="5" r="3" fill="#eee"/><rect x="3" y="9" width="11" height="7" rx="1" fill="#eee"/><path d="M14 12l5-3v7l-5-3z" fill="#eee"/><circle cx="6.5" cy="5" r="1" fill="#777"/><circle cx="12.5" cy="5" r="1" fill="#777"/></svg>
<svg class="ic" style="left:1553px;top:294px" width="20" height="20" viewBox="0 0 20 20"><path d="M5 3h10l3 14H2z M3.5 10h13M4.5 6.5h11M8 3l-1 14M12 3l1 14" fill="none" stroke="#eee" stroke-width="1.3"/></svg>
<!-- magnified overlay -->
<div class="a" style="left:131px;top:85px;width:650px;height:834px;overflow:hidden;background:linear-gradient(180deg,#bababa,#b4b4b4)">
<svg width="650" height="834" viewBox="131 85 650 834"><path d="M135 624L54 650M71 566L216 597M181 764L99 791M117 707L262 738M117 707L163 848M226 905L145 932M145 932L82 874M163 848L308 879M163 848L209 989M163 848L64 958M142 232L61 259M79 175L224 206M188 373L107 399M125 316L269 346M125 316L170 456M234 514L153 540M153 540L89 483M170 456L315 487M170 456L216 597M170 456L71 566M280 654L198 681M198 681L135 624M135 624L153 540M216 597L361 628M216 597L262 738M216 597L117 707M325 795L244 822M244 822L181 764M181 764L198 681M262 738L407 769M262 738L308 879M262 738L163 848M290 962L226 905M226 905L244 822M308 879L452 909M308 879L353 1019M308 879L209 989M241 122L160 149M160 149L97 91M178 65L323 96M178 65L224 206M178 65L79 175M287 263L206 289M206 289L142 232M142 232L160 149M224 206L368 236M224 206L269 346M224 206L125 316M333 404L252 430M252 430L188 373M188 373L206 289M269 346L414 377M269 346L315 487M269 346L170 456M379 544L297 571M297 571L234 514M234 514L252 430M315 487L460 518M315 487L361 628M315 487L216 597M424 685L343 712M343 712L280 654M280 654L297 571M361 628L506 659M361 628L407 769M361 628L262 738M470 826L389 852M389 852L325 795M325 795L343 712M407 769L551 799M407 769L452 909M407 769L308 879M371 936L389 852M452 909L597 940M452 909L498 1050M452 909L353 1019M386 153L305 179M305 179L241 122M241 122L259 39M323 96L468 126M323 96L368 236M323 96L224 206M432 294L351 320M351 320L287 263M287 263L305 179M368 236L513 267M368 236L414 377M368 236L269 346M478 434L396 461M396 461L333 404M333 404L351 320M414 377L559 408M414 377L460 518M414 377L315 487M523 575L442 602M442 602L379 544M379 544L396 461M460 518L605 549M460 518L506 659M460 518L361 628M569 716L488 742M488 742L424 685M424 685L442 602M506 659L650 690M506 659L551 799M506 659L407 769M615 857L534 883M534 883L470 826M470 826L488 742M551 799L696 830M551 799L597 940M551 799L452 909M516 967L534 883M531 184L450 210M450 210L386 153M386 153L404 69M468 126L612 157M468 126L513 267M468 126L368 236M577 324L495 351M495 351L432 294M432 294L450 210M513 267L658 298M513 267L559 408M513 267L414 377M623 465L541 492M541 492L478 434M478 434L495 351M559 408L704 439M559 408L605 549M559 408L460 518M668 606L587 632M587 632L523 575M523 575L541 492M605 549L750 580M605 549L650 690M605 549L506 659M714 747L633 773M633 773L569 716M569 716L587 632M650 690L795 720M650 690L696 830M650 690L551 799M760 887L678 914M678 914L615 857M615 857L633 773M696 830L841 861M696 830L742 971M696 830L597 940M661 997L678 914M630 74L549 100M549 100L485 43M567 17L612 157M567 17L468 126M676 214L595 241M595 241L531 184M531 184L549 100M612 157L757 188M612 157L658 298M612 157L513 267M722 355L640 382M640 382L577 324M577 324L595 241M658 298L803 329M658 298L704 439M658 298L559 408M767 496L686 522M686 522L623 465M623 465L640 382M704 439L849 470M704 439L750 580M704 439L605 549M813 637L732 663M732 663L668 606M668 606L686 522M750 580L894 610M750 580L795 720M750 580L650 690M859 777L777 804M777 804L714 747M714 747L732 663M795 720L696 830M823 945L760 887M760 887L777 804M841 861L742 971M775 104L694 131M694 131L630 74M711 47L757 188M711 47L612 157M821 245L739 272M739 272L676 214M676 214L694 131M757 188L902 219M757 188L803 329M757 188L658 298M785 412L722 355M722 355L739 272M803 329L704 439M831 553L767 496M767 496L785 412M849 470L750 580M838 162L775 104M775 104L793 21M856 78L757 188" stroke="#1e1e1e" stroke-width="1.1" fill="none" stroke-opacity="0.95"/></svg>
<div class="a" style="left:0;top:0;width:650px;height:7px;background:#191919"></div>
<div class="a" style="left:0;top:2px;width:78px;height:2px;background:#262626"></div>
<div class="a" style="left:0;top:7px;width:650px;height:36px;background:#333333"></div>
<div class="a" style="left:0;top:43px;width:650px;height:52px;background:rgba(40,40,40,0.66)"></div>
</div>
<div class="a" style="left:125px;top:80px;width:662px;height:5px;background:linear-gradient(0deg,#4f7fbf,rgba(79,127,191,0))"></div>
<div class="a" style="left:781px;top:85px;width:6px;height:834px;background:linear-gradient(90deg,#4f7fbf,rgba(79,127,191,0.35) 40%,rgba(79,127,191,0))"></div>
<div class="a" style="left:125px;top:85px;width:6px;height:834px;background:linear-gradient(270deg,#4f7fbf,rgba(79,127,191,0.35) 40%,rgba(79,127,191,0))"></div>
<div class="a" style="left:125px;top:919px;width:662px;height:6px;background:linear-gradient(180deg,#4f7fbf,rgba(79,127,191,0.35) 40%,rgba(79,127,191,0))"></div>
<!-- magnified header menu -->
<div class="a" style="left:176px;top:96px;width:63px;height:33px;background:#4a6ea8;border-radius:8px 8px 0 0"></div>
<div class="c" style="left:131px;top:101px;font-size:19px;line-height:22px;color:#cfcfcf;width:31px;overflow:hidden;direction:rtl">视图</div>
<div class="c" style="left:187px;top:101px;font-size:19px;line-height:22px;color:#e8e8e8">选择</div>
<div class="c" style="left:251px;top:101px;font-size:19px;line-height:22px;color:#cfcfcf">添加</div>
<div class="c" style="left:315px;top:101px;font-size:19px;line-height:22px;color:#cfcfcf">网格</div>
<div class="c" style="left:379px;top:101px;font-size:19px;line-height:22px;color:#cfcfcf">顶点</div>
<div class="c" style="left:442px;top:101px;font-size:19px;line-height:22px;color:#cfcfcf">边</div>
<div class="c" style="left:486px;top:101px;font-size:19px;line-height:22px;color:#cfcfcf">面</div>
<div class="c" style="left:530px;top:101px;font-size:19px;line-height:22px;color:#cfcfcf">UV</div>
<!-- main dropdown -->
<div class="a" style="left:176px;top:128px;width:288px;height:704px;background:#181818;border-radius:0 0 8px 8px"></div>
<div class="a" style="left:176px;top:246px;width:288px;height:2px;background:#2a2a2a"></div>
<div class="a" style="left:176px;top:364px;width:288px;height:2px;background:#2a2a2a"></div>
<div class="a" style="left:176px;top:448px;width:288px;height:2px;background:#2a2a2a"></div>
<div class="a" style="left:176px;top:497px;width:288px;height:2px;background:#2a2a2a"></div>
<div class="a" style="left:176px;top:547px;width:288px;height:2px;background:#2a2a2a"></div>
<div class="a" style="left:176px;top:597px;width:288px;height:2px;background:#2a2a2a"></div>
<div class="a" style="left:176px;top:646px;width:288px;height:2px;background:#2a2a2a"></div>
<div class="a" style="left:176px;top:696px;width:288px;height:2px;background:#2a2a2a"></div>
<div class="a" style="left:176px;top:746px;width:288px;height:2px;background:#2a2a2a"></div>
<div class="a" style="left:181px;top:508px;width:276px;height:29px;background:#4772b3;border-radius:5px"></div>
<div class="mi" style="top:141px">全部</div><div class="ms" style="top:141px">A</div>
<div class="mi" style="top:175px">无</div><div class="ms" style="top:175px">Alt A</div>
<div class="mi" style="top:209px">反转</div><div class="ms" style="top:209px">Ctrl I</div>
<div class="mi" style="top:259px">框选</div><div class="ms" style="top:259px">鼠标左键</div>
<div class="mi" style="top:293px">刷选</div><div class="ms" style="top:293px">C</div>
<div class="mi" style="top:328px">套索选择</div><div class="ma" style="top:332px"></div>
<div class="mi" style="top:377px">随机选择</div>
<div class="mi" style="top:412px">间隔式弃选</div>
<div class="mi" style="top:462px">选择锐边</div>
<div class="mi" style="top:511px;color:#f0f0f0">选择相似</div><div class="ms" style="top:511px;right:1486px;color:#a9bde0">Shift G</div><div class="ma" style="top:515px;left:442px;border-left-color:#c8d4ea"></div>
<div class="mi" style="top:561px">按特征全选</div><div class="ma" style="top:565px"></div>
<div class="mi" style="top:611px">扩展/缩减选择</div><div class="ma" style="top:615px"></div>
<div class="mi" style="top:661px">选择循环</div><div class="ma" style="top:665px"></div>
<div class="mi" style="top:710px">选择相连元素</div><div class="ma" style="top:714px"></div>
<div class="mi" style="top:760px">活动项的同侧</div>
<div class="mi" style="top:794px">选择镜像</div><div class="ms" style="top:794px">Shift Ctrl M</div>
<!-- submenu -->
<div class="a" style="left:465px;top:497px;width:291px;height:398px;background:#181818;border-radius:6px"></div>
<div class="a" style="left:465px;top:848px;width:291px;height:2px;background:#2a2a2a"></div>
<div class="a" style="left:469px;top:619px;width:280px;height:31px;background:#4772b3;border-radius:5px"></div>
<div class="si" style="top:510px">长度</div>
<div class="si" style="top:548px">方向</div>
<div class="si" style="top:585px">一条边周围的面的数量</div>
<div class="si" style="top:623px;color:#f0f0f0">面的顶角</div>
<div class="si" style="top:661px">折痕</div>
<div class="si" style="top:698px">倒角</div>
<div class="si" style="top:736px">缝合边</div>
<div class="si" style="top:774px">锐度</div>
<div class="si" style="top:812px">Freestyle 边标记</div>
<div class="a" style="left:520px;top:835px;width:8px;height:2px;background:#cfcfcf"></div>
<div class="si" style="top:861px">面区域</div>
<div class="a" style="left:480px;top:609px;width:211px;height:48px;border:3px solid #ee3b3b"></div>
<!-- tooltip -->
<div class="a" style="left:564px;top:670px;width:217px;height:56px;overflow:hidden"><div class="a" style="left:0;top:0;width:300px;height:56px;background:#1c1c1c;border:1px solid #2c2c2c;border-radius:6px"></div>
<div class="c" style="left:22px;top:15px;font-size:19px;line-height:22px;color:#d2d2d2">按属性类型选择相似的顶点</div></div>

<!-- toolbar -->
<div class="a tbg" style="top:117px;height:70px"></div>
<div class="a tbg" style="top:192px;height:139px"></div>
<div class="a tbg" style="top:337px;height:70px"></div>
<div class="a tbg" style="top:412px;height:35px"></div>
<div class="a tbg" style="top:452px;height:423px"></div>
<div class="a" style="left:8px;top:117px;width:41px;height:34px;background:#4772b3;border-radius:5px 5px 0 0"></div>
<div class="a" style="left:8px;top:151px;width:41px;height:1px;background:#1f1f1f"></div>
<div class="a" style="left:8px;top:227px;width:41px;height:1px;background:#1f1f1f"></div>
<div class="a" style="left:8px;top:262px;width:41px;height:1px;background:#1f1f1f"></div>
<div class="a" style="left:8px;top:297px;width:41px;height:1px;background:#1f1f1f"></div>
<div class="a" style="left:8px;top:372px;width:41px;height:1px;background:#1f1f1f"></div>
<div class="a" style="left:8px;top:487px;width:41px;height:1px;background:#1f1f1f"></div>
<div class="a" style="left:8px;top:522px;width:41px;height:1px;background:#1f1f1f"></div>
<div class="a" style="left:8px;top:557px;width:41px;height:1px;background:#1f1f1f"></div>
<div class="a" style="left:8px;top:593px;width:41px;height:1px;background:#1f1f1f"></div>
<div class="a" style="left:8px;top:628px;width:41px;height:1px;background:#1f1f1f"></div>
<div class="a" style="left:8px;top:663px;width:41px;height:1px;background:#1f1f1f"></div>
<div class="a" style="left:8px;top:698px;width:41px;height:1px;background:#1f1f1f"></div>
<div class="a" style="left:8px;top:733px;width:41px;height:1px;background:#1f1f1f"></div>
<div class="a" style="left:8px;top:769px;width:41px;height:1px;background:#1f1f1f"></div>
<div class="a" style="left:8px;top:804px;width:41px;height:1px;background:#1f1f1f"></div>
<div class="a" style="left:8px;top:839px;width:41px;height:1px;background:#1f1f1f"></div>
<svg class="ic" style="left:16px;top:121px" width="25" height="25" viewBox="0 0 22 22"><rect x="0.5" y="0.5" width="21" height="21" fill="none" stroke="#f5a623" stroke-width="1.5" stroke-dasharray="4 2.6"/><path d="M7.5 5.5L15.5 12 11 12.5 8.5 16.5z" fill="#e8e8e8"/></svg>
<svg class="ic" style="left:16px;top:156px" width="25" height="25" viewBox="0 0 22 22"><circle cx="11" cy="11" r="11" fill="none" stroke="#eee" stroke-width="1.5"/><circle cx="11" cy="11" r="11" fill="none" stroke="#a02828" stroke-width="1.5" stroke-dasharray="5.5 5.5" stroke-dashoffset="2.7"/><path d="M11 4v5M11 13v5M4 11h5M13 11h5" stroke="#999" stroke-width="1.4"/></svg>
<svg class="ic" style="left:16px;top:196px" width="25" height="25" viewBox="0 0 22 22"><path d="M11 2l3 3h-2v4h-2V5H8zM11 20l3-3h-2v-4h-2v4H8zM2 11l3-3v2h4v2H5v2zM20 11l-3-3v2h-4v2h4v2z" fill="#e6e6e6"/></svg>
<svg class="ic" style="left:16px;top:231px" width="25" height="25" viewBox="0 0 22 22"><path d="M4 9a7.5 7.5 0 0 1 14 0M18 13a7.5 7.5 0 0 1-14 0" fill="none" stroke="#e6e6e6" stroke-width="1.5"/><path d="M2 8l3 3 2-4zM20 14l-3-3-2 4z" fill="#e6e6e6"/><path d="M11 8l3 3-3 3-3-3z" fill="#e6e6e6"/></svg>
<svg class="ic" style="left:16px;top:266px" width="25" height="25" viewBox="0 0 22 22"><rect x="3" y="11" width="8" height="8" fill="#e6e6e6"/><path d="M5 9V3h14v14h-6" fill="none" stroke="#e6e6e6" stroke-width="1.4"/><path d="M11 11l6-6M13 5h4v4" fill="none" stroke="#e6e6e6" stroke-width="1.4"/></svg>
<svg class="ic" style="left:16px;top:301px" width="25" height="25" viewBox="0 0 22 22"><circle cx="11" cy="11" r="8" fill="none" stroke="#e6e6e6" stroke-width="1.5" stroke-dasharray="9 3.5"/><rect x="7" y="7" width="8" height="8" fill="#e6e6e6"/><path d="M11 1l2 2H9zM11 21l2-2H9zM1 11l2 2V9zM21 11l-2 2V9z" fill="#e6e6e6"/></svg>
<svg class="ic" style="left:16px;top:342px" width="25" height="25" viewBox="0 0 22 22"><path d="M3 14l10-10 3 3-10 10H3z" fill="none" stroke="#e6e6e6" stroke-width="1.5"/><path d="M4 20c4-4 7 2 10-1s4 0 6-2" fill="none" stroke="#7fd6a4" stroke-width="1.4"/></svg>
<svg class="ic" style="left:16px;top:377px" width="25" height="25" viewBox="0 0 22 22"><path d="M4 2v17h15" fill="none" stroke="#e6e6e6" stroke-width="2"/><path d="M6 8a11 11 0 0 1 11 11H6z" fill="#7fd6a4"/><path d="M6 6h2M6 10h2M10 19v-2M14 19v-2" stroke="#e6e6e6" stroke-width="1"/></svg>
<svg class="ic" style="left:16px;top:417px" width="25" height="25" viewBox="0 0 22 22"><path d="M2 6h6M5 3v6" stroke="#7fd6a4" stroke-width="2"/><path d="M6 10l4-4h10v10l-4 4H6zM6 10h10v10M16 10l4-4" fill="none" stroke="#e6e6e6" stroke-width="1.3"/></svg>
<svg class="ic" style="left:16px;top:458px" width="25" height="25" viewBox="0 0 22 22"><path d="M4 8l4-4h11v4l-4 4H4z" fill="#7fd6a4"/><path d="M4 8v12h11V8M15 20l4-4V4" fill="none" stroke="#e6e6e6" stroke-width="1.3"/></svg>
<svg class="ic" style="left:16px;top:493px" width="25" height="25" viewBox="0 0 22 22"><path d="M4 7l3-3h12v12l-3 3H4z" fill="none" stroke="#e6e6e6" stroke-width="1.3"/><path d="M4 7h12v12H4z" fill="#7fd6a4"/><rect x="7.5" y="10.5" width="5" height="5" fill="#2a2a2a"/><path d="M4 7l3.5 3.5M16 7l-3.5 3.5M4 19l3.5-3.5M16 19l-3.5-3.5" stroke="#222" stroke-width="1"/></svg>
<svg class="ic" style="left:16px;top:528px" width="25" height="25" viewBox="0 0 22 22"><path d="M4 11l2-4 5-3h8v6l-3 3H4z" fill="#7fd6a4"/><path d="M4 11v9h12v-8M16 20l3-3V9" fill="none" stroke="#e6e6e6" stroke-width="1.3"/></svg>
<svg class="ic" style="left:16px;top:564px" width="25" height="25" viewBox="0 0 22 22"><path d="M3 7l3-3h13v13l-3 3H3zM3 7h13v13M16 7l3-3" fill="none" stroke="#e6e6e6" stroke-width="1.3"/><path d="M10 20V7l3-3" fill="none" stroke="#7fd6a4" stroke-width="1.6"/></svg>
<svg class="ic" style="left:16px;top:599px" width="25" height="25" viewBox="0 0 22 22"><path d="M3 7l3-3h13v13l-3 3H3zM3 7h13v13M16 7l3-3" fill="none" stroke="#e6e6e6" stroke-width="1.3"/><path d="M7 5l2 13" stroke="#7fd6a4" stroke-width="1.6"/><circle cx="7" cy="5" r="1.7" fill="#7fd6a4"/><circle cx="9" cy="18" r="1.7" fill="#7fd6a4"/></svg>
<svg class="ic" style="left:16px;top:634px" width="25" height="25" viewBox="0 0 22 22"><path d="M5 9l4-5 6 1 3 6-2 7H5z" fill="#7fd6a4"/><circle cx="9" cy="4" r="1.5" fill="#fff"/><circle cx="15" cy="5" r="1.5" fill="#fff"/><circle cx="18" cy="11" r="1.5" fill="#fff"/><circle cx="5" cy="9" r="1.5" fill="#fff"/><circle cx="5" cy="17" r="1.5" fill="#fff"/><circle cx="16" cy="17" r="1.5" fill="#fff"/></svg>
<svg class="ic" style="left:16px;top:669px" width="25" height="25" viewBox="0 0 22 22"><circle cx="10" cy="12" r="8" fill="#7fd6a4"/><path d="M10 12V4M10 12l6-5M10 12l8 1M10 12l5 6M10 12l-2 8M10 12l-7 3M10 12L3 8" stroke="#2a2a2a" stroke-width="1"/><path d="M10 4a8 8 0 0 1 6 3" fill="#2a2a2a"/><path d="M12 3l5 2" stroke="#e6e6e6" stroke-width="1.2"/></svg>
<svg class="ic" style="left:16px;top:704px" width="25" height="25" viewBox="0 0 22 22"><ellipse cx="11" cy="12" rx="8" ry="7" fill="#d7bbf0"/><path d="M3 12h16M11 5v14M5 8c4 2 8 2 12 0M5 16c4-2 8-2 12 0" fill="none" stroke="#2a2a2a" stroke-width="1"/></svg>
<svg class="ic" style="left:16px;top:740px" width="25" height="25" viewBox="0 0 22 22"><path d="M6 8l3-3h10v12l-3 3H6zM6 8h10v12M16 8l3-3" fill="none" stroke="#e6e6e6" stroke-width="1.3"/><path d="M3 8V20" stroke="#e6e6e6" stroke-width="1.3"/><path d="M2 2l4 1-2 3z" fill="#d7bbf0"/></svg>
<svg class="ic" style="left:16px;top:775px" width="25" height="25" viewBox="0 0 22 22"><rect x="7" y="7" width="8" height="8" fill="none" stroke="#e6e6e6" stroke-width="1.3"/><path d="M7 7l8 8M15 7l-8 8" stroke="#e6e6e6" stroke-width="1.3"/><path d="M11 1l3 3H8zM11 21l3-3H8zM1 11l3-3v6zM21 11l-3-3v6z" fill="#d7bbf0"/></svg>
<svg class="ic" style="left:16px;top:810px" width="25" height="25" viewBox="0 0 22 22"><path d="M2 10l5-4h9l4 7-5 4H6z" fill="#d7bbf0"/><path d="M2 10h14l4 7" fill="none" stroke="#2a2a2a" stroke-width="1"/><path d="M16 2l4 0-1 3z" fill="#d7bbf0"/></svg>
<svg class="ic" style="left:16px;top:845px" width="25" height="25" viewBox="0 0 22 22"><path d="M9 7l3-3h8v11l-3 3H9zM9 7h8v11M17 7l3-3" fill="none" stroke="#e6e6e6" stroke-width="1.3"/><path d="M9 18L3 15 9 10" fill="none" stroke="#e6e6e6" stroke-width="1.3"/><circle cx="3" cy="15" r="1.6" fill="#d7bbf0"/></svg>
<div class="a" style="left:42px;top:144px;width:0;height:0;border-left:4px solid transparent;border-bottom:4px solid #8a8a8a"></div>
<div class="a" style="left:42px;top:289px;width:0;height:0;border-left:4px solid transparent;border-bottom:4px solid #8a8a8a"></div>
<div class="a" style="left:42px;top:365px;width:0;height:0;border-left:4px solid transparent;border-bottom:4px solid #8a8a8a"></div>
<div class="a" style="left:42px;top:440px;width:0;height:0;border-left:4px solid transparent;border-bottom:4px solid #8a8a8a"></div>
<div class="a" style="left:42px;top:481px;width:0;height:0;border-left:4px solid transparent;border-bottom:4px solid #8a8a8a"></div>
<div class="a" style="left:42px;top:586px;width:0;height:0;border-left:4px solid transparent;border-bottom:4px solid #8a8a8a"></div>
<div class="a" style="left:42px;top:621px;width:0;height:0;border-left:4px solid transparent;border-bottom:4px solid #8a8a8a"></div>
<div class="a" style="left:42px;top:656px;width:0;height:0;border-left:4px solid transparent;border-bottom:4px solid #8a8a8a"></div>
<div class="a" style="left:42px;top:691px;width:0;height:0;border-left:4px solid transparent;border-bottom:4px solid #8a8a8a"></div>
<div class="a" style="left:42px;top:726px;width:0;height:0;border-left:4px solid transparent;border-bottom:4px solid #8a8a8a"></div>
<div class="a" style="left:42px;top:761px;width:0;height:0;border-left:4px solid transparent;border-bottom:4px solid #8a8a8a"></div>
<div class="a" style="left:42px;top:797px;width:0;height:0;border-left:4px solid transparent;border-bottom:4px solid #8a8a8a"></div>
<div class="a" style="left:42px;top:832px;width:0;height:0;border-left:4px solid transparent;border-bottom:4px solid #8a8a8a"></div>
<div class="a" style="left:42px;top:867px;width:0;height:0;border-left:4px solid transparent;border-bottom:4px solid #8a8a8a"></div>
<!-- 3D header contents -->
<div class="bx" style="left:10px;top:61px;width:31px;height:19px;background:#282828;border-color:#363636"></div>
<svg class="ic" style="left:13px;top:62px" width="26" height="17" viewBox="0 0 26 17"><path d="M1.5 10.5h10 M1.5 14.5h10 M4 8v8 M9 8v8" stroke="#d8d8d8" stroke-width="1.2" fill="none"/><circle cx="10" cy="5" r="3.2" fill="#e0e0e0"/><path d="M16.5 9.5l2.5 2.5 2.5-2.5" fill="none" stroke="#d8d8d8" stroke-width="1.2"/></svg>
<div class="bx" style="left:47px;top:61px;width:108px;height:19px;background:#282828;border-color:#363636"></div>
<svg class="ic" style="left:50px;top:63px" width="15" height="15" viewBox="0 0 15 15"><rect x="1" y="2" width="3" height="3" fill="none" stroke="#d8d8d8" stroke-width="1"/><rect x="10" y="1" width="4" height="4" fill="#e6e6e6"/><rect x="1" y="11" width="3" height="3" fill="none" stroke="#d8d8d8" stroke-width="1"/><rect x="10" y="11" width="3" height="3" fill="none" stroke="#d8d8d8" stroke-width="1"/><path d="M4 3.5h6 M2.5 5v6 M11.5 5v6 M4 12.5h6" stroke="#d8d8d8" stroke-width="1"/></svg>
<div class="c" style="left:72px;top:63px">编辑模式</div>
<svg class="ic" style="left:144px;top:68px" width="10" height="6"><path d="M1 1l4 4 4-4" fill="none" stroke="#d8d8d8" stroke-width="1.2"/></svg>
<div class="bx" style="left:162px;top:61px;width:58px;height:19px;background:#4a4a4a;border-color:#3a3a3a"></div>
<div class="a" style="left:181px;top:62px;width:19px;height:17px;background:#4772b3"></div>
<svg class="ic" style="left:163px;top:62px" width="56" height="17" viewBox="0 0 56 17"><path d="M6 3h8l3 3v8H6v-3" fill="none" stroke="#d8d8d8" stroke-width="1"/><rect x="3.5" y="6.5" width="3" height="3" fill="#e8e8e8"/><path d="M23 13V6l3-3h8v8l-2 2" fill="none" stroke="#e8e8e8" stroke-width="1"/><rect x="27.5" y="6" width="2.2" height="9" fill="#fff"/><path d="M44 4h9v8l-2 2" fill="none" stroke="#d8d8d8" stroke-width="1"/><rect x="42" y="6" width="9" height="8" fill="#e0e0e0"/></svg>
<div class="c" style="left:233px;top:63px">视图</div>
<div class="c" style="left:270px;top:63px">选择</div>
<div class="c" style="left:307px;top:63px">添加</div>
<div class="c" style="left:344px;top:63px">网格</div>
<div class="c" style="left:381px;top:63px">顶点</div>
<div class="c" style="left:418px;top:63px">边</div>
<div class="c" style="left:444px;top:63px">面</div>
<div class="c" style="left:470px;top:63px;font-size:11.3px">UV</div>
<!-- transform orientation -->
<div class="bx" style="left:668px;top:61px;width:79px;height:19px;background:#282828;border-color:#363636"></div>
<svg class="ic" style="left:671px;top:63px" width="16" height="15" viewBox="0 0 16 15"><path d="M3 1v11h11 M3 12l7-7 M1 3l2-2 2 2 M12 10l2 2-2 2 M7 5h3v3" fill="none" stroke="#d8d8d8" stroke-width="1.1"/></svg>
<div class="c" style="left:693px;top:63px">全局</div>
<svg class="ic" style="left:736px;top:68px" width="10" height="6"><path d="M1 1l4 4 4-4" fill="none" stroke="#d8d8d8" stroke-width="1.2"/></svg>
<div class="bx" style="left:753px;top:61px;width:30px;height:19px;background:#282828;border-color:#363636"></div>
<svg class="ic" style="left:756px;top:63px" width="26" height="15" viewBox="0 0 26 15"><circle cx="5.5" cy="9.5" r="4" fill="none" stroke="#d8d8d8" stroke-width="1.1"/><circle cx="10" cy="5" r="4" fill="none" stroke="#d8d8d8" stroke-width="1.1"/><circle cx="7.5" cy="7.2" r="1.4" fill="#e6e6e6"/><path d="M16 5.5l2.5 2.5 2.5-2.5" fill="none" stroke="#d8d8d8" stroke-width="1.2"/></svg>
<div class="bx" style="left:790px;top:61px;width:50px;height:19px;background:#282828;border-color:#363636"></div>
<div class="a" style="left:791px;top:62px;width:18px;height:17px;background:#545454;border-radius:3px 0 0 3px"></div>
<svg class="ic" style="left:791px;top:62px" width="48" height="17" viewBox="0 0 48 17"><path d="M3.5 9.5L8.5 4.5a3.6 3.6 0 0 1 5 5L8.5 14.5" fill="none" stroke="#b0b0b0" stroke-width="1.5"/><path d="M5.5 7.5L8 10M9 12.5l1 1M2.5 10.5l1 1" stroke="#b0b0b0" stroke-width="1"/><path d="M16 10h12 M16.5 8v5 M20 9v3 M23.5 9v3 M27 8v5" stroke="#d8d8d8" stroke-width="1"/><rect x="25" y="3" width="3" height="3" fill="#e6e6e6"/><path d="M31.5 7.5l2.5 2.5 2.5-2.5" fill="none" stroke="#d8d8d8" stroke-width="1.2"/></svg>
<div class="bx" style="left:847px;top:61px;width:49px;height:19px;background:#282828;border-color:#363636"></div>
<div class="a" style="left:848px;top:62px;width:17px;height:17px;background:#545454;border-radius:3px 0 0 3px"></div>
<svg class="ic" style="left:848px;top:62px" width="48" height="17" viewBox="0 0 48 17"><circle cx="8.5" cy="8.5" r="5.5" fill="none" stroke="#8a8a8a" stroke-width="1"/><circle cx="8.5" cy="8.5" r="1.8" fill="#c8c8c8"/><path d="M20 14c3 0 3-11 5-11s2 11 5 11" fill="none" stroke="#c8c8c8" stroke-width="1.1"/><path d="M34 8l2 2 2-2" fill="none" stroke="#555" stroke-width="1"/></svg>
<!-- right side of 3D header -->
<div class="bx" style="left:1329px;top:61px;width:31px;height:19px;background:#282828;border-color:#363636"></div>
<svg class="ic" style="left:1331px;top:62px" width="28" height="17" viewBox="0 0 28 17"><path d="M6 5.5c2.5-4 8.5-4 11 0c-2.5 4-8.5 4-11 0z" fill="none" stroke="#e6e6e6" stroke-width="1.3"/><circle cx="11.5" cy="5.5" r="2" fill="#e6e6e6"/><path d="M2 7.5l3.5 9 1.5-3.5 4-1z" fill="#e6e6e6"/><path d="M19.5 7.5l2.5 2.5 2.5-2.5" fill="none" stroke="#d8d8d8" stroke-width="1.2"/></svg>
<div class="a" style="left:1367px;top:61px;width:18px;height:19px;background:#4772b3;border-radius:4px 0 0 4px"></div>
<svg class="ic" style="left:1368px;top:62px" width="36" height="17" viewBox="0 0 36 17"><path d="M4 13C6 7 10 4 16 3.5M12 2h5v5M17 2L10 9M12 7c3 2 4 5 3.5 9" fill="none" stroke="#e8e8e8" stroke-width="1.2"/><circle cx="3.5" cy="14" r="1.8" fill="none" stroke="#e8e8e8" stroke-width="1.2"/><path d="M24 7.5l2.5 2.5 2.5-2.5" fill="none" stroke="#d8d8d8" stroke-width="1.2"/></svg>
<div class="a" style="left:1412px;top:61px;width:18px;height:19px;background:#4772b3;border-radius:4px 0 0 4px"></div>
<svg class="ic" style="left:1413px;top:62px" width="36" height="17" viewBox="0 0 36 17"><path d="M4.5 7.5a5 5 0 1 0 6 6" fill="none" stroke="#e8e8e8" stroke-width="1.3"/><circle cx="10.5" cy="6.5" r="5.2" fill="#e8e8e8"/><circle cx="9" cy="8" r="1.8" fill="none" stroke="#4772b3" stroke-width="1"/><path d="M24 7.5l2.5 2.5 2.5-2.5" fill="none" stroke="#d8d8d8" stroke-width="1.2"/></svg>
<div class="bx" style="left:1457px;top:61px;width:19px;height:19px;background:#282828;border-color:#363636"></div>
<svg class="ic" style="left:1459px;top:63px" width="15" height="15" viewBox="0 0 15 15"><path d="M4.5 3V1h9.5v9.5h-2" fill="none" stroke="#d0d0d0" stroke-width="1.1"/><rect x="1" y="4" width="10" height="10" fill="none" stroke="#d0d0d0" stroke-width="1.1"/><path d="M4 7v2M4 11h3" stroke="#d0d0d0" stroke-width="1.1"/></svg>
<div class="bx" style="left:1481px;top:61px;width:96px;height:19px;background:#282828;border-color:#363636"></div>
<div class="a" style="left:1482px;top:62px;width:75px;height:17px;background:#414141;border-radius:3px 0 0 3px"></div>
<div class="a" style="left:1500px;top:62px;width:19px;height:17px;background:#4772b3"></div>
<div class="a" style="left:1538px;top:62px;width:1px;height:17px;background:#363636"></div>
<svg class="ic" style="left:1482px;top:62px" width="95" height="17" viewBox="0 0 95 17"><circle cx="9.5" cy="8.5" r="6.3" fill="none" stroke="#d8d8d8" stroke-width="1"/><path d="M3.5 6.5h12M3.5 10.5h12M8 2.5v12M11 2.5v12" stroke="#d8d8d8" stroke-width="0.9" fill="none"/><circle cx="28.5" cy="8.5" r="6.5" fill="#fff"/><circle cx="47.5" cy="8.5" r="6.3" fill="none" stroke="#d8d8d8" stroke-width="1"/><path d="M47.5 2.2a6.3 6.3 0 0 0 -6.3 6.3h6.3v6.3a6.3 6.3 0 0 0 0 0z" fill="#c8c8c8"/><path d="M47.5 2.2v12.6M41.2 8.5h6.3" stroke="#d8d8d8" stroke-width="1"/><circle cx="66.5" cy="8.5" r="6.3" fill="none" stroke="#d8d8d8" stroke-width="1"/><path d="M62 7a4.5 4.5 0 0 1 4-3.5" fill="none" stroke="#d8d8d8" stroke-width="1"/><path d="M79 7.5l2.5 2.5 2.5-2.5" fill="none" stroke="#d8d8d8" stroke-width="1.2"/></svg>
<!-- outliner -->
<div class="a" style="left:1588px;top:58px;width:332px;height:307px;border-radius:8px;overflow:hidden;background:#282828">
  <div class="a" style="left:0;top:0;width:332px;height:25px;background:#2b2b2b"></div>
</div>
<!-- properties -->
<div class="a" style="left:1588px;top:368px;width:332px;height:651px;border-radius:8px;overflow:hidden;background:#2e2e2e">
  <div class="a" style="left:0;top:0;width:332px;height:25px;background:#303030"></div>
  <div class="a" style="left:0;top:25px;width:28px;height:626px;background:#1f1f1f"></div>
</div>
<!-- timeline -->
<div class="a" style="left:0;top:948px;width:1585px;height:71px;border-radius:8px;overflow:hidden;background:#1d1d1d">
  <div class="a" style="left:0;top:0;width:1585px;height:25px;background:#333333"></div>
</div>
<!-- status bar -->
<div class="a" style="left:0;top:1019px;width:1920px;height:21px;background:#1f1f1f"></div>
<div class="a" style="left:0;top:1040px;width:1920px;height:1px;background:#3c3c3c"></div>
<div class="a" style="left:0;top:1041px;width:1920px;height:7px;background:#1c1c1c"></div>
<!-- outliner header contents -->
<div class="bx" style="left:1596px;top:61px;width:32px;height:19px;background:#282828;border-color:#363636"></div>
<svg class="ic" style="left:1600px;top:63px" width="26" height="15" viewBox="0 0 26 15"><rect x="1" y="1" width="5" height="2.5" fill="#d8d8d8"/><path d="M2.5 3.5v8h3 M2.5 7h3" fill="none" stroke="#d8d8d8" stroke-width="1"/><rect x="6" y="6" width="7" height="2.5" fill="#e6e6e6"/><rect x="6" y="10" width="7" height="2.5" fill="#e6e6e6"/><path d="M16.5 6.5l2.5 2.5 2.5-2.5" fill="none" stroke="#d8d8d8" stroke-width="1.2"/></svg>
<div class="bx" style="left:1633px;top:61px;width:32px;height:19px;background:#282828;border-color:#363636"></div>
<svg class="ic" style="left:1636px;top:63px" width="28" height="15" viewBox="0 0 28 15"><path d="M1 4v10h10 M3 2v10h10V2z" fill="none" stroke="#d0d0d0" stroke-width="1.2"/><path d="M5 10l3-4 2 2 2-3v5z" fill="#d0d0d0"/><path d="M17.5 6.5l2.5 2.5 2.5-2.5" fill="none" stroke="#d8d8d8" stroke-width="1.2"/></svg>
<div class="bx" style="left:1687px;top:61px;width:110px;height:19px;background:#1d1d1d;border-color:#333;border-radius:5px"></div>
<svg class="ic" style="left:1691px;top:63px" width="14" height="14" viewBox="0 0 14 14"><circle cx="8.5" cy="5.5" r="4" fill="none" stroke="#d8d8d8" stroke-width="1.3"/><path d="M5.5 8.5L1 13" stroke="#d8d8d8" stroke-width="1.5"/></svg>
<div class="bx" style="left:1855px;top:61px;width:31px;height:19px;background:#282828;border-color:#363636"></div>
<svg class="ic" style="left:1858px;top:63px" width="26" height="15" viewBox="0 0 26 15"><path d="M1 1.5h12L8.5 7.5v6l-3-2v-4z" fill="none" stroke="#d8d8d8" stroke-width="1.1"/><path d="M17 6.5l2.5 2.5 2.5-2.5" fill="none" stroke="#d8d8d8" stroke-width="1.2"/></svg>
<div class="bx" style="left:1891px;top:61px;width:20px;height:19px;background:#4a4a4a;border-color:#3a3a3a"></div>
<svg class="ic" style="left:1894px;top:63px" width="16" height="15" viewBox="0 0 16 15"><path d="M1 4h6 M2 4v9h10v-2" fill="none" stroke="#d8d8d8" stroke-width="1.3"/><circle cx="11" cy="4.5" r="4" fill="#eee"/><path d="M11 2v5M8.5 4.5h5" stroke="#333" stroke-width="1.3"/></svg>

<!-- outliner content -->
<div class="a" style="left:1588px;top:104px;width:332px;height:20px;background:#2b2b2b"></div>
<div class="a" style="left:1588px;top:144px;width:332px;height:20px;background:#2b2b2b"></div>
<div class="a" style="left:1588px;top:184px;width:332px;height:20px;background:#2b2b2b"></div>
<div class="a" style="left:1588px;top:224px;width:332px;height:20px;background:#2b2b2b"></div>
<div class="a" style="left:1588px;top:264px;width:332px;height:20px;background:#2b2b2b"></div>
<div class="a" style="left:1588px;top:304px;width:332px;height:20px;background:#2b2b2b"></div>
<div class="a" style="left:1588px;top:344px;width:332px;height:20px;background:#2b2b2b"></div>
<svg class="ic" style="left:1611px;top:87px" width="14" height="14" viewBox="0 0 14 14"><path d="M1 1h12v3H1z" fill="#d8d8d8"/><path d="M2 5h10v8H2z" fill="#d8d8d8"/><rect x="5" y="6.5" width="4" height="1.5" fill="#282828"/></svg>
<div class="c" style="left:1632px;top:88px;font-size:11px;color:#d8d8d8">场景集合</div>
<div class="a" style="left:1616px;top:111px;width:0;height:0;border-top:7px solid #c8c8c8;border-left:4px solid transparent;border-right:4px solid transparent"></div>
<div class="a" style="left:1628px;top:105px;width:20px;height:19px;background:#3c3c3c;border:1px solid #4a4a4a;border-radius:4px"></div>
<svg class="ic" style="left:1631px;top:107px" width="14" height="14" viewBox="0 0 14 14"><path d="M1 1h12v3H1z" fill="#d8d8d8"/><path d="M2 5h10v8H2z" fill="#d8d8d8"/><rect x="5" y="6.5" width="4" height="1.5" fill="#282828"/></svg>
<div class="c" style="left:1652px;top:108px;font-size:11.5px;color:#dedede">Collection</div>
<div class="a" style="left:1854px;top:108px;width:12px;height:12px;background:#e8e8e8;border-radius:2px"></div><svg class="ic" style="left:1855px;top:109px" width="10" height="10"><path d="M1.5 5l2.5 2.5 5-5.5" fill="none" stroke="#222" stroke-width="1.8"/></svg>
<svg class="ic" style="left:1873px;top:107px" width="14" height="14" viewBox="0 0 14 14"><path d="M1 7c3-5 9-5 12 0c-3 5-9 5-12 0z" fill="none" stroke="#e0e0e0" stroke-width="1.3"/><circle cx="7" cy="7" r="2.6" fill="#e0e0e0"/></svg>
<svg class="ic" style="left:1893px;top:107px" width="14" height="14" viewBox="0 0 14 14"><path d="M1 4h3l1.5-2h3L10 4h3v9H1z" fill="#e0e0e0"/><circle cx="7" cy="8.2" r="3" fill="#282828"/><circle cx="7" cy="8.2" r="1.7" fill="#e0e0e0"/></svg>
<svg class="ic" style="left:1590px;top:127px" width="15" height="15" viewBox="0 0 15 15"><rect x="1" y="2" width="3" height="3" fill="none" stroke="#d8d8d8" stroke-width="1"/><rect x="10" y="1" width="4" height="4" fill="#e6e6e6"/><rect x="1" y="11" width="3" height="3" fill="none" stroke="#d8d8d8" stroke-width="1"/><rect x="10" y="11" width="3" height="3" fill="none" stroke="#d8d8d8" stroke-width="1"/><path d="M4 3.5h6 M2.5 5v6 M11.5 5v6 M4 12.5h6" stroke="#d8d8d8" stroke-width="1"/></svg>
<div class="a" style="left:1617px;top:128px;width:1px;height:12px;background:#555"></div>
<div class="a" style="left:1637px;top:130px;width:0;height:0;border-left:7px solid #c8c8c8;border-top:4px solid transparent;border-bottom:4px solid transparent"></div>
<div class="a" style="left:1648px;top:125px;width:20px;height:19px;background:#3c3c3c;border:1px solid #4a4a4a;border-radius:4px"></div>
<svg class="ic" style="left:1651px;top:128px" width="14" height="14" viewBox="0 0 14 14"><path d="M1 1h12L7 13z" fill="#e6964a"/><path d="M4 3h6L7 9z" fill="#3c3c3c"/></svg>
<div class="c" style="left:1673px;top:128px;font-size:11px;color:#dedede">棱角球</div>
<div class="a" style="left:1725px;top:125px;width:20px;height:19px;background:#284a40;border:1px solid #3a5a50;border-radius:4px"></div>
<svg class="ic" style="left:1728px;top:128px" width="14" height="14" viewBox="0 0 14 14"><path d="M2 2h10L7 12z" fill="none" stroke="#3fd9a8" stroke-width="1.3"/><rect x="0.5" y="0.5" width="3" height="3" fill="#284a40" stroke="#3fd9a8"/><rect x="10.5" y="0.5" width="3" height="3" fill="#284a40" stroke="#3fd9a8"/><rect x="5.5" y="10.5" width="3" height="3" fill="#284a40" stroke="#3fd9a8"/></svg>
<svg class="ic" style="left:1873px;top:127px" width="14" height="14" viewBox="0 0 14 14"><path d="M1 7c3-5 9-5 12 0c-3 5-9 5-12 0z" fill="none" stroke="#e0e0e0" stroke-width="1.3"/><circle cx="7" cy="7" r="2.6" fill="#e0e0e0"/></svg>
<svg class="ic" style="left:1893px;top:127px" width="14" height="14" viewBox="0 0 14 14"><path d="M1 4h3l1.5-2h3L10 4h3v9H1z" fill="#e0e0e0"/><circle cx="7" cy="8.2" r="3" fill="#282828"/><circle cx="7" cy="8.2" r="1.7" fill="#e0e0e0"/></svg>
<!-- properties content -->
<div class="bx" style="left:1597px;top:371px;width:31px;height:20px;background:#282828;border-color:#363636"></div>
<svg class="ic" style="left:1600px;top:373px" width="26" height="16" viewBox="0 0 26 16"><rect x="1" y="1" width="13" height="6" rx="3" fill="#e6e6e6"/><rect x="8" y="2.5" width="4" height="3" fill="#333"/><rect x="1" y="9" width="13" height="6" rx="3" fill="#e6e6e6"/><rect x="9" y="10.5" width="4" height="3" fill="#333"/><path d="M16.5 6.5l2.5 2.5 2.5-2.5" fill="none" stroke="#d8d8d8" stroke-width="1.2"/></svg>
<div class="bx" style="left:1700px;top:371px;width:110px;height:19px;background:#1d1d1d;border-color:#333;border-radius:5px"></div>
<svg class="ic" style="left:1704px;top:373px" width="14" height="14" viewBox="0 0 14 14"><circle cx="8.5" cy="5.5" r="4" fill="none" stroke="#d8d8d8" stroke-width="1.3"/><path d="M5.5 8.5L1 13" stroke="#d8d8d8" stroke-width="1.5"/></svg>
<div class="bx" style="left:1893px;top:371px;width:19px;height:19px;background:#282828;border-color:#363636"></div>
<svg class="ic" style="left:1898px;top:378px" width="10" height="6"><path d="M1 1l4 4 4-4" fill="none" stroke="#e0e0e0" stroke-width="1.3"/></svg>
<div class="a" style="left:1590px;top:650px;width:26px;height:27px;background:#303030;border-radius:4px 0 0 4px"></div>
<div class="a" style="left:1588px;top:435px;width:28px;height:1px;background:#2a2a2a"></div>
<div class="a" style="left:1588px;top:581px;width:28px;height:1px;background:#2a2a2a"></div>
<div class="a" style="left:1588px;top:617px;width:28px;height:1px;background:#2a2a2a"></div>
<svg class="ic" style="left:1596px;top:407px" width="14" height="14" viewBox="0 0 14 14"><path d="M3.5 1v6" stroke="#ddd" stroke-width="1.2"/><rect x="1.5" y="8" width="4" height="6" rx="1" fill="#ddd"/><path d="M10.5 6v8" stroke="#ddd" stroke-width="2"/><path d="M8 1v3l2.5 2 2.5-2V1" fill="none" stroke="#ddd" stroke-width="1.4"/></svg>
<svg class="ic" style="left:1596px;top:443px" width="14" height="14" viewBox="0 0 14 14"><rect x="1" y="5" width="11" height="8" fill="#ccc"/><path d="M3 5l2-4h4" stroke="#ccc" fill="none"/><rect x="12" y="6" width="2" height="6" fill="#ccc"/><circle cx="5" cy="9" r="2" fill="#333"/></svg>
<svg class="ic" style="left:1596px;top:472px" width="14" height="14" viewBox="0 0 14 14"><path d="M1 2h12v4H1z" fill="#ccc"/><path d="M2 6h10v7H2z" fill="#ccc"/><path d="M4 11l2-3 2 2 2-2v3z" fill="#333"/></svg>
<svg class="ic" style="left:1596px;top:500px" width="14" height="14" viewBox="0 0 14 14"><path d="M1 4v9h9 M3 2v9h9V2z" fill="none" stroke="#ccc" stroke-width="1.2"/><path d="M5 9l2-3 2 2 2-2v3z" fill="#ccc"/></svg>
<svg class="ic" style="left:1596px;top:528px" width="14" height="14" viewBox="0 0 14 14"><path d="M4 2L1 8a3 3 0 0 0 6 0z" fill="#ccc"/><circle cx="10" cy="3.5" r="2" fill="#ccc"/><circle cx="9.5" cy="10" r="3" fill="none" stroke="#ccc" stroke-width="1.2"/></svg>
<svg class="ic" style="left:1596px;top:556px" width="14" height="14" viewBox="0 0 14 14"><circle cx="7" cy="7" r="6" fill="#b84a4a"/><path d="M3 4c2 1 3 0 4 2s-1 4 1 6M9 2c0 2 2 3 4 3" fill="none" stroke="#2a2a2a" stroke-width="1.2"/></svg>
<svg class="ic" style="left:1596px;top:593px" width="14" height="14" viewBox="0 0 14 14"><path d="M1 1h12v3H1z" fill="#ccc"/><path d="M2 5h10v8H2z" fill="none" stroke="#ccc" stroke-width="1.3"/><rect x="5" y="6.5" width="4" height="1.5" fill="#ccc"/></svg>
<svg class="ic" style="left:1596px;top:628px" width="14" height="14" viewBox="0 0 14 14"><rect x="3" y="3" width="8" height="8" fill="#e6964a"/><path d="M1 4V1h3M10 1h3v3M13 10v3h-3M4 13H1v-3" fill="none" stroke="#e6964a" stroke-width="1.3"/></svg>
<svg class="ic" style="left:1596px;top:656px" width="14" height="14" viewBox="0 0 14 14"><path d="M13 1.2a3.8 3.8 0 0 0-4.9 4.9L1.2 13l1.8 1.8 6.9-6.9A3.8 3.8 0 0 0 14.8 3l-2.1 2.1-1.9-.5-.5-1.9z" fill="#5a9cf0"/></svg>
<svg class="ic" style="left:1596px;top:684px" width="14" height="14" viewBox="0 0 14 14"><circle cx="3" cy="3" r="2" fill="#5a8ad0"/><circle cx="12" cy="3" r="1.6" fill="#5a8ad0"/><circle cx="12" cy="12" r="1.6" fill="#5a8ad0"/><path d="M3 3l9 9M3 3h9M3 3v9" stroke="#5a8ad0" stroke-width="1.3"/></svg>
<svg class="ic" style="left:1596px;top:712px" width="14" height="14" viewBox="0 0 14 14"><circle cx="7" cy="7" r="5.5" fill="none" stroke="#5a8ad0" stroke-width="1.4"/><circle cx="7" cy="7" r="2.5" fill="#5a8ad0"/><circle cx="11" cy="3" r="1.5" fill="#5a8ad0"/></svg>
<svg class="ic" style="left:1596px;top:740px" width="14" height="14" viewBox="0 0 14 14"><ellipse cx="7" cy="8" rx="5.5" ry="4.5" transform="rotate(-30 7 8)" fill="none" stroke="#5a8ad0" stroke-width="1.4"/><circle cx="6" cy="9" r="2" fill="#5a8ad0"/><circle cx="11" cy="3" r="1.6" fill="#5a8ad0"/></svg>
<svg class="ic" style="left:1596px;top:768px" width="14" height="14" viewBox="0 0 14 14"><path d="M2 2h10L7 12z" fill="none" stroke="#3fd9a8" stroke-width="1.4"/><rect x="0.5" y="0.5" width="3" height="3" fill="#1f1f1f" stroke="#3fd9a8"/><rect x="10.5" y="0.5" width="3" height="3" fill="#1f1f1f" stroke="#3fd9a8"/><rect x="5.5" y="10.5" width="3" height="3" fill="#1f1f1f" stroke="#3fd9a8"/></svg>
<svg class="ic" style="left:1596px;top:796px" width="14" height="14" viewBox="0 0 14 14"><circle cx="7" cy="7" r="6" fill="#c25656"/><path d="M7 1v12M1 7h12" stroke="#2a2a2a" stroke-width="1"/><path d="M7 1a6 6 0 0 1 6 6H7zM7 13a6 6 0 0 1-6-6h6z" fill="#ddd"/></svg>
<svg class="ic" style="left:1627px;top:404px" width="15" height="15" viewBox="0 0 15 15"><rect x="4" y="4" width="7" height="7" fill="#e0e0e0"/><path d="M1 4V1h3M11 1h3v3M14 11v3h-3M4 14H1v-3" fill="none" stroke="#e0e0e0" stroke-width="1.3"/></svg>
<div class="c" style="left:1650px;top:404px;font-size:11px;color:#e0e0e0">棱角球</div>
<svg class="ic" style="left:1896px;top:404px" width="15" height="15" viewBox="0 0 15 15"><path d="M1 14l4-4M4 7l4 4M6 5l4 4 1-3 2-2-3-3-2 2z" fill="none" stroke="#a0a0a0" stroke-width="1.1"/></svg>
<div class="bx" style="left:1624px;top:437px;width:288px;height:20px;background:#282828;border-color:#3a3a3a"></div>
<div class="c" style="left:1632px;top:440px;font-size:11px;color:#e0e0e0">添加修改器</div>
<svg class="ic" style="left:1900px;top:444px" width="10" height="6"><path d="M1 1l4 4 4-4" fill="none" stroke="#e0e0e0" stroke-width="1.2"/></svg>
<!-- timeline content -->
<div class="bx" style="left:8px;top:952px;width:32px;height:19px;background:#282828;border-color:#363636"></div>
<svg class="ic" style="left:12px;top:954px" width="26" height="15" viewBox="0 0 26 15"><circle cx="7" cy="7.5" r="6.5" fill="#e6e6e6"/><path d="M8.5 3.5L5.5 7.5l3 4" fill="none" stroke="#282828" stroke-width="1.8"/><path d="M16.5 6.5l2.5 2.5 2.5-2.5" fill="none" stroke="#d8d8d8" stroke-width="1.2"/></svg>
<div class="bx" style="left:45px;top:952px;width:123px;height:19px;background:#282828;border-color:#363636"></div>
<div class="a" style="left:91px;top:953px;width:1px;height:17px;background:#363636"></div>
<div class="c" style="left:53px;top:954px;font-size:11.5px">回放</div>
<svg class="ic" style="left:81px;top:959px" width="10" height="6"><path d="M1 1l4 4 4-4" fill="none" stroke="#d8d8d8" stroke-width="1.2"/></svg>
<div class="c" style="left:99px;top:954px;font-size:11px">抠像(插帧)</div>
<svg class="ic" style="left:156px;top:959px" width="10" height="6"><path d="M1 1l4 4 4-4" fill="none" stroke="#d8d8d8" stroke-width="1.2"/></svg>
<div class="c" style="left:178px;top:954px;font-size:11px">视图</div>
<div class="c" style="left:215px;top:954px;font-size:11px">标记</div>
<div class="bx" style="left:700px;top:952px;width:39px;height:19px;background:#282828;border-color:#363636"></div>
<div class="a" style="left:701px;top:953px;width:19px;height:17px;background:#4a4a4a;border-radius:3px 0 0 3px"></div>
<svg class="ic" style="left:701px;top:953px" width="38" height="17" viewBox="0 0 38 17"><circle cx="9.5" cy="8.5" r="4" fill="#e8e8e8"/><path d="M25 7.5l2.5 2.5 2.5-2.5" fill="none" stroke="#555" stroke-width="1"/></svg>
<div class="bx" style="left:746px;top:952px;width:118px;height:19px;background:#4a4a4a;border-color:#3a3a3a"></div>
<div class="a" style="left:766px;top:953px;width:1px;height:17px;background:#3a3a3a"></div>
<div class="a" style="left:785px;top:953px;width:1px;height:17px;background:#3a3a3a"></div>
<div class="a" style="left:805px;top:953px;width:1px;height:17px;background:#3a3a3a"></div>
<div class="a" style="left:825px;top:953px;width:1px;height:17px;background:#3a3a3a"></div>
<div class="a" style="left:844px;top:953px;width:1px;height:17px;background:#3a3a3a"></div>
<svg class="ic" style="left:746px;top:953px" width="118" height="17" viewBox="0 0 118 17"><path d="M5 3v11" stroke="#eee" stroke-width="1.6"/><path d="M15 3v11l-8-5.5z" fill="#eee"/><path d="M21 8.5l4-4 4 4-4 4zM36 4v9l-6-4.5z" fill="#eee"/><path d="M55 3v11l-8-5.5z" fill="#eee"/><path d="M66 3v11l8-5.5z" fill="#eee"/><path d="M80 4v9l6-4.5zM87 8.5l4-4 4 4-4 4z" fill="#eee"/><path d="M103 3v11l8-5.5z" fill="#eee"/><path d="M113 3v11" stroke="#eee" stroke-width="1.6"/></svg>
<div class="bx" style="left:1297px;top:952px;width:73px;height:19px;background:#4a4a4a;border-color:#3f3f3f"></div>
<div class="c" style="left:1328px;top:954px;font-size:11.5px;color:#e0e0e0">1</div>
<div class="bx" style="left:1377px;top:952px;width:201px;height:19px;background:#4a4a4a;border-color:#3f3f3f"></div>
<div class="a" style="left:1378px;top:953px;width:18px;height:17px;background:#3d3d3d;border-radius:3px 0 0 3px"></div>
<div class="a" style="left:1482px;top:953px;width:1px;height:17px;background:#3a3a3a"></div>
<svg class="ic" style="left:1379px;top:954px" width="15" height="15" viewBox="0 0 15 15"><circle cx="7.5" cy="8.5" r="5.5" fill="none" stroke="#e0e0e0" stroke-width="1.3"/><path d="M7.5 8.5V5.5M5.5 1.5h4M12 3.5l1 1" stroke="#e0e0e0" stroke-width="1.3"/></svg>
<div class="c" style="left:1411px;top:954px;font-size:11px;color:#e0e0e0">起始</div>
<div class="c" style="left:1462px;top:954px;font-size:11.5px;color:#e0e0e0">1</div>
<div class="c" style="left:1498px;top:954px;font-size:11px;color:#e0e0e0">结束点</div>
<div class="c" style="left:1544px;top:954px;font-size:11.5px;color:#e0e0e0">250</div>
<!-- timeline body -->
<div class="a" style="left:1px;top:995px;width:1584px;height:24px;background:#2a2a2a;overflow:hidden">
<div class="a" style="left:51px;top:0;width:1px;height:24px;background:#1f1f1f"></div><div class="a" style="left:81px;top:0;width:1px;height:24px;background:#1f1f1f"></div><div class="a" style="left:110px;top:0;width:1px;height:24px;background:#1f1f1f"></div><div class="a" style="left:140px;top:0;width:1px;height:24px;background:#1f1f1f"></div><div class="a" style="left:169px;top:0;width:1px;height:24px;background:#1f1f1f"></div><div class="a" style="left:199px;top:0;width:1px;height:24px;background:#1f1f1f"></div><div class="a" style="left:228px;top:0;width:1px;height:24px;background:#1f1f1f"></div><div class="a" style="left:258px;top:0;width:1px;height:24px;background:#1f1f1f"></div><div class="a" style="left:287px;top:0;width:1px;height:24px;background:#1f1f1f"></div><div class="a" style="left:317px;top:0;width:1px;height:24px;background:#1f1f1f"></div><div class="a" style="left:346px;top:0;width:1px;height:24px;background:#1f1f1f"></div><div class="a" style="left:376px;top:0;width:1px;height:24px;background:#1f1f1f"></div><div class="a" style="left:405px;top:0;width:1px;height:24px;background:#1f1f1f"></div><div class="a" style="left:435px;top:0;width:1px;height:24px;background:#1f1f1f"></div><div class="a" style="left:464px;top:0;width:1px;height:24px;background:#1f1f1f"></div><div class="a" style="left:494px;top:0;width:1px;height:24px;background:#1f1f1f"></div><div class="a" style="left:523px;top:0;width:1px;height:24px;background:#1f1f1f"></div><div class="a" style="left:553px;top:0;width:1px;height:24px;background:#1f1f1f"></div><div class="a" style="left:582px;top:0;width:1px;height:24px;background:#1f1f1f"></div><div class="a" style="left:612px;top:0;width:1px;height:24px;background:#1f1f1f"></div><div class="a" style="left:641px;top:0;width:1px;height:24px;background:#1f1f1f"></div><div class="a" style="left:671px;top:0;width:1px;height:24px;background:#1f1f1f"></div><div class="a" style="left:700px;top:0;width:1px;height:24px;background:#1f1f1f"></div><div class="a" style="left:730px;top:0;width:1px;height:24px;background:#1f1f1f"></div><div class="a" style="left:759px;top:0;width:1px;height:24px;background:#1f1f1f"></div><div class="a" style="left:789px;top:0;width:1px;height:24px;background:#1f1f1f"></div><div class="a" style="left:818px;top:0;width:1px;height:24px;background:#1f1f1f"></div><div class="a" style="left:848px;top:0;width:1px;height:24px;background:#1f1f1f"></div><div class="a" style="left:877px;top:0;width:1px;height:24px;background:#1f1f1f"></div><div class="a" style="left:907px;top:0;width:1px;height:24px;background:#1f1f1f"></div><div class="a" style="left:936px;top:0;width:1px;height:24px;background:#1f1f1f"></div><div class="a" style="left:966px;top:0;width:1px;height:24px;background:#1f1f1f"></div><div class="a" style="left:995px;top:0;width:1px;height:24px;background:#1f1f1f"></div><div class="a" style="left:1025px;top:0;width:1px;height:24px;background:#1f1f1f"></div><div class="a" style="left:1054px;top:0;width:1px;height:24px;background:#1f1f1f"></div><div class="a" style="left:1084px;top:0;width:1px;height:24px;background:#1f1f1f"></div><div class="a" style="left:1113px;top:0;width:1px;height:24px;background:#1f1f1f"></div><div class="a" style="left:1143px;top:0;width:1px;height:24px;background:#1f1f1f"></div><div class="a" style="left:1172px;top:0;width:1px;height:24px;background:#1f1f1f"></div><div class="a" style="left:1202px;top:0;width:1px;height:24px;background:#1f1f1f"></div><div class="a" style="left:1231px;top:0;width:1px;height:24px;background:#1f1f1f"></div><div class="a" style="left:1261px;top:0;width:1px;height:24px;background:#1f1f1f"></div><div class="a" style="left:1290px;top:0;width:1px;height:24px;background:#1f1f1f"></div><div class="a" style="left:1320px;top:0;width:1px;height:24px;background:#1f1f1f"></div><div class="a" style="left:1349px;top:0;width:1px;height:24px;background:#1f1f1f"></div><div class="a" style="left:1379px;top:0;width:1px;height:24px;background:#1f1f1f"></div><div class="a" style="left:1408px;top:0;width:1px;height:24px;background:#1f1f1f"></div><div class="a" style="left:1438px;top:0;width:1px;height:24px;background:#1f1f1f"></div><div class="a" style="left:1467px;top:0;width:1px;height:24px;background:#1f1f1f"></div><div class="a" style="left:1497px;top:0;width:1px;height:24px;background:#1f1f1f"></div><div class="a" style="left:1526px;top:0;width:1px;height:24px;background:#1f1f1f"></div><div class="a" style="left:1556px;top:0;width:1px;height:24px;background:#1f1f1f"></div><div class="a" style="left:0;top:0;width:52px;height:24px;background:#232323"></div><div class="a" style="left:1527px;top:0;width:58px;height:24px;background:#232323"></div></div>
<div class="a" style="left:9px;top:1009px;width:1568px;height:8px;background:#4f4f4f;border-radius:4px"></div>
<div class="a" style="left:10px;top:1010px;width:7px;height:6px;background:#2a2a2a;border-radius:50%"></div>
<div class="a" style="left:1569px;top:1010px;width:7px;height:6px;background:#2a2a2a;border-radius:50%"></div>
<div class="c" style="left:91px;top:978px;width:40px;text-align:center;font-size:11.5px;color:#c8c8c8">10</div>
<div class="c" style="left:150px;top:978px;width:40px;text-align:center;font-size:11.5px;color:#c8c8c8">20</div>
<div class="c" style="left:209px;top:978px;width:40px;text-align:center;font-size:11.5px;color:#c8c8c8">30</div>
<div class="c" style="left:268px;top:978px;width:40px;text-align:center;font-size:11.5px;color:#c8c8c8">40</div>
<div class="c" style="left:327px;top:978px;width:40px;text-align:center;font-size:11.5px;color:#c8c8c8">50</div>
<div class="c" style="left:386px;top:978px;width:40px;text-align:center;font-size:11.5px;color:#c8c8c8">60</div>
<div class="c" style="left:445px;top:978px;width:40px;text-align:center;font-size:11.5px;color:#c8c8c8">70</div>
<div class="c" style="left:504px;top:978px;width:40px;text-align:center;font-size:11.5px;color:#c8c8c8">80</div>
<div class="c" style="left:563px;top:978px;width:40px;text-align:center;font-size:11.5px;color:#c8c8c8">90</div>
<div class="c" style="left:622px;top:978px;width:40px;text-align:center;font-size:11.5px;color:#c8c8c8">100</div>
<div class="c" style="left:681px;top:978px;width:40px;text-align:center;font-size:11.5px;color:#c8c8c8">110</div>
<div class="c" style="left:740px;top:978px;width:40px;text-align:center;font-size:11.5px;color:#c8c8c8">120</div>
<div class="c" style="left:799px;top:978px;width:40px;text-align:center;font-size:11.5px;color:#c8c8c8">130</div>
<div class="c" style="left:858px;top:978px;width:40px;text-align:center;font-size:11.5px;color:#c8c8c8">140</div>
<div class="c" style="left:917px;top:978px;width:40px;text-align:center;font-size:11.5px;color:#c8c8c8">150</div>
<div class="c" style="left:976px;top:978px;width:40px;text-align:center;font-size:11.5px;color:#c8c8c8">160</div>
<div class="c" style="left:1035px;top:978px;width:40px;text-align:center;font-size:11.5px;color:#c8c8c8">170</div>
<div class="c" style="left:1094px;top:978px;width:40px;text-align:center;font-size:11.5px;color:#c8c8c8">180</div>
<div class="c" style="left:1153px;top:978px;width:40px;text-align:center;font-size:11.5px;color:#c8c8c8">190</div>
<div class="c" style="left:1212px;top:978px;width:40px;text-align:center;font-size:11.5px;color:#c8c8c8">200</div>
<div class="c" style="left:1271px;top:978px;width:40px;text-align:center;font-size:11.5px;color:#c8c8c8">210</div>
<div class="c" style="left:1330px;top:978px;width:40px;text-align:center;font-size:11.5px;color:#c8c8c8">220</div>
<div class="c" style="left:1389px;top:978px;width:40px;text-align:center;font-size:11.5px;color:#c8c8c8">230</div>
<div class="c" style="left:1448px;top:978px;width:40px;text-align:center;font-size:11.5px;color:#c8c8c8">240</div>
<div class="c" style="left:1507px;top:978px;width:40px;text-align:center;font-size:11.5px;color:#c8c8c8">250</div>
<div class="a" style="left:47px;top:976px;width:23px;height:18px;background:#4772b3;border-radius:4px"></div>
<div class="c" style="left:47px;top:978px;width:23px;text-align:center;font-size:11.5px;color:#fff">1</div>
<div class="a" style="left:57px;top:994px;width:2px;height:25px;background:#4a80d0"></div>
<svg class="ic" style="left:1px;top:985px" width="8" height="10"><path d="M1.5 1l4 4-4 4" fill="none" stroke="#999" stroke-width="1"/></svg>
<div class="a" style="left:1577px;top:978px;width:5px;height:35px;background:#333;border-radius:3px"></div>
<svg class="ic" style="left:1577px;top:988px" width="8" height="10"><path d="M5.5 1l-4 4 4 4" fill="none" stroke="#999" stroke-width="1"/></svg>
<!-- status bar -->
<svg class="ic" style="left:11px;top:1022px" width="12" height="16" viewBox="0 0 12 16"><rect x="1" y="1" width="10" height="14" rx="5" fill="none" stroke="#bbb" stroke-width="1.1"/><path d="M1.5 7V6a4.5 4.5 0 0 1 4.5-4.5V7z" fill="#bbb"/></svg>
<div class="c" style="left:34px;top:1023px;font-size:11px;color:#c0c0c0">选择</div>
<svg class="ic" style="left:222px;top:1022px" width="12" height="16" viewBox="0 0 12 16"><rect x="1" y="1" width="10" height="14" rx="5" fill="none" stroke="#bbb" stroke-width="1.1"/><rect x="5" y="3" width="2" height="4" fill="#bbb"/></svg>
<div class="c" style="left:245px;top:1023px;font-size:11px;color:#c0c0c0">旋转视图</div>
<svg class="ic" style="left:434px;top:1022px" width="12" height="16" viewBox="0 0 12 16"><rect x="1" y="1" width="10" height="14" rx="5" fill="none" stroke="#bbb" stroke-width="1.1"/><path d="M10.5 7V6A4.5 4.5 0 0 0 6 1.5V7z" fill="#bbb"/></svg>
<div class="c" style="left:457px;top:1023px;font-size:11px;color:#c0c0c0">调用菜单</div>
<div class="c" style="left:1884px;top:1023px;font-size:12px;color:#a0a0a0">3.3.7</div>
<div class="a" style="left:31px;top:1044px;width:12px;height:12px;border-radius:50%;background:#e07a90"></div>
<!-- END -->
<div class="a" style="left:1078px;top:1044px;width:8px;height:8px;border-radius:50%;background:#b048c8"></div>
</body></html>
